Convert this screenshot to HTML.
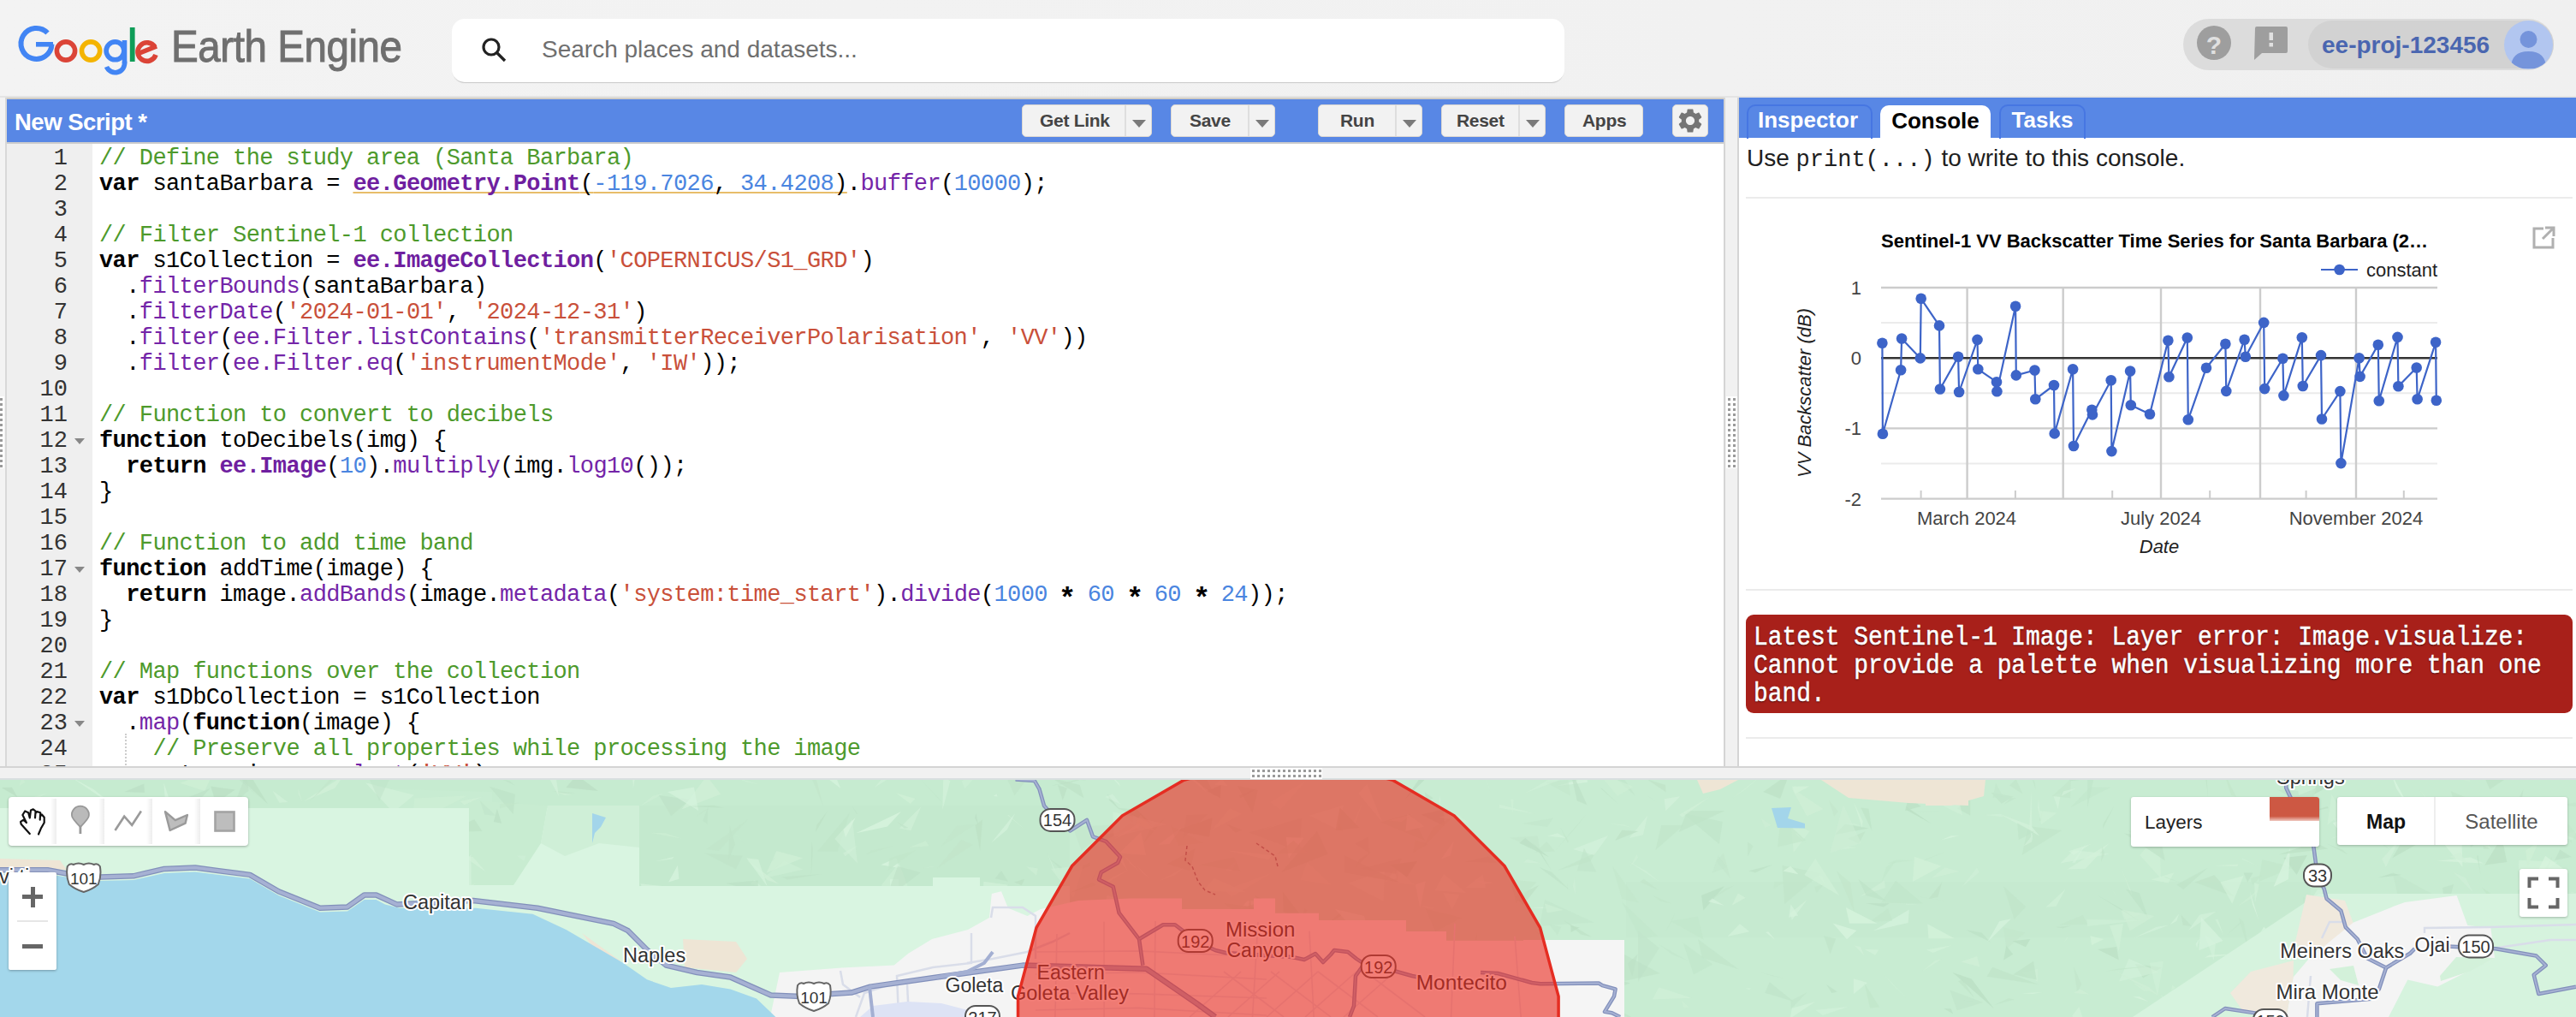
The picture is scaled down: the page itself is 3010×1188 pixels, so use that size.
<!DOCTYPE html>
<html><head><meta charset="utf-8">
<style>
*{margin:0;padding:0;box-sizing:border-box}
html,body{width:3010px;height:1188px;overflow:hidden;background:#f0f0f0;font-family:"Liberation Sans",sans-serif}
.a{position:absolute}
#hdr{left:0;top:0;width:3010px;height:112px;background:linear-gradient(90deg,#f3f3f3,#f0f0f0)}
#hdrline{left:0;top:112px;width:3010px;height:2px;background:#e4e4e4}
.logo-ee{left:200px;top:24px;font-size:52px;color:#6f6f6f;letter-spacing:-0.5px;line-height:60px;white-space:nowrap;transform-origin:0 0;transform:scaleX(0.915);-webkit-text-stroke:1px #6f6f6f}
#search{left:528px;top:22px;width:1300px;height:74px;background:#fff;border-radius:15px;box-shadow:0 2px 1px -1px #c8c8c8}
#search .ph{left:105px;top:19px;font-size:28px;color:#6f6f6f;line-height:34px;white-space:nowrap}
#rgrp{left:2551px;top:22px;width:433px;height:60px;border-radius:30px;background:#dcdcdc}
#proj{left:2697px;top:24px;width:287px;height:56px;border-radius:28px;background:#d2d2d2}
#projtxt{left:2713px;top:36px;font-size:28px;font-weight:bold;color:#4a66b0;line-height:34px;white-space:nowrap}
#avatar{left:2926px;top:24px;width:57px;height:57px;border-radius:50%;background:#b2c6f0;overflow:hidden}
/* left code panel */
#lsplit{left:0;top:114px;width:6px;height:782px;background:#f3f3f3}
#lborder{left:6px;top:114px;width:2px;height:782px;background:#d8d8d8}
#ptop{left:8px;top:114px;width:2006px;height:2px;background:#d0ccc6}
#pbar{left:8px;top:116px;width:2006px;height:50px;background:#5887e5}
#pbot{left:8px;top:166px;width:2006px;height:2px;background:#cccccc}
#ptitle{left:17px;top:126px;font-size:27.5px;font-weight:bold;color:#fff;line-height:34px;white-space:nowrap;letter-spacing:-0.5px}
.btn{position:absolute;top:122px;height:38px;background:#f2f2f2;border:1px solid #dcd8d2;border-radius:5px}
.btn span{position:absolute;top:0;line-height:36px;font-size:21px;font-weight:bold;color:#444;white-space:nowrap;letter-spacing:-0.3px}
.btn .dv{position:absolute;top:0;width:2px;height:36px;background:#dedede}
.btn .tri{position:absolute;top:17px;width:0;height:0;border-left:8px solid transparent;border-right:8px solid transparent;border-top:9px solid #7a7a7a}
#editor{left:8px;top:168px;width:2006px;height:727px;background:#fff;overflow:hidden}
#gutter{left:0;top:0;width:100px;height:727px;background:#efefef}
.ln{position:absolute;left:0;width:71px;text-align:right;font-family:"Liberation Mono",monospace;font-size:27px;color:#333;line-height:30px}
.cl{position:absolute;left:108px;font-family:"Liberation Mono",monospace;font-size:27px;letter-spacing:-0.6px;color:#000;line-height:30px;white-space:pre}
.ul{text-decoration:underline;text-decoration-color:#e8bd6a;text-decoration-thickness:2px;text-underline-offset:2px;text-decoration-skip-ink:none}
.ast{display:inline-block;width:15.6px;text-align:center;transform:translateY(5px) scale(1.25);font-weight:bold}
.c{color:#4d9a2c}.k{font-weight:bold;color:#000}.ee{font-weight:bold;color:#6f1fa0}.m{color:#7425a8}.s{color:#c9503a}.n{color:#4a85e0}
.fold{position:absolute;left:79px;width:0;height:0;border-left:6px solid transparent;border-right:6px solid transparent;border-top:7px solid #888}
#edbot{left:8px;top:895px;width:2006px;height:2px;background:#d4d4d4}
/* vertical splitter */
#vs1{left:2014px;top:114px;width:2px;height:782px;background:#d4d4d4}
#vs{left:2016px;top:114px;width:14px;height:782px;background:#f1f1f1}
#vs2{left:2030px;top:114px;width:2px;height:782px;background:#d4d4d4}
/* right panel */
#rpanel{left:2032px;top:114px;width:978px;height:782px;background:#fff}
#rbar{left:2032px;top:114px;width:978px;height:47px;background:#5887e5}
.tab{position:absolute;height:40px;border:2px solid #4676e2;border-bottom:none;border-radius:10px 10px 0 0;font-size:26px;font-weight:bold;color:#fff;line-height:33px;text-align:center;white-space:nowrap}
#console-txt{left:2041px;top:168px;font-size:28px;color:#202020;line-height:34px;white-space:nowrap}
#console-txt code{font-family:"Liberation Mono",monospace;font-size:27px}
.hr{position:absolute;height:2px;background:#ebebeb}
#err{left:2040px;top:718px;width:966px;height:115px;background:#a8201a;border-radius:9px}
#err div{position:absolute;left:9px;top:10px;font-family:"Liberation Mono",monospace;font-size:31px;line-height:33px;color:#fff;text-shadow:0 1px 2px rgba(40,0,0,0.8);-webkit-text-stroke:0.5px #fff;white-space:pre;transform-origin:0 0;transform:scaleX(0.9)}
/* h splitter */
#hs1{left:0;top:895px;width:3010px;height:2px;background:#d4d4d4}
#hs{left:0;top:897px;width:3010px;height:12px;background:#f1f1f1}
#hs2{left:0;top:909px;width:3010px;height:2px;background:#d9dfe0}
/* map */
#map{left:0;top:911px;width:3010px;height:277px;overflow:hidden;background:#c8eed3}
</style></head>
<body>
<div class="a" id="hdr"></div>
<div class="a" id="hdrline"></div>
<!-- Google logo -->
<svg class="a" style="left:0;top:0" width="200" height="100" viewBox="0 0 200 100">
 <path d="M60.5 51.7 A18 18 0 1 1 55.5 38.5" fill="none" stroke="#4285f4" stroke-width="6"/>
 <rect x="42" y="49" width="20" height="5.6" fill="#4285f4"/>
 <circle cx="77" cy="59.5" r="10.6" fill="none" stroke="#db4437" stroke-width="5.6"/>
 <circle cx="106.1" cy="59.5" r="10.6" fill="none" stroke="#f4b400" stroke-width="5.6"/>
 <circle cx="134.5" cy="59.3" r="10.4" fill="none" stroke="#4285f4" stroke-width="5.6"/>
 <rect x="142.7" y="47" width="5.6" height="27" fill="#4285f4"/>
 <path d="M145.5 72 A11 11 0 0 1 124.5 78" fill="none" stroke="#4285f4" stroke-width="5.6"/>
 <rect x="151.8" y="32" width="5.8" height="40" fill="#0f9d58"/>
 <path d="M182 64 A10.8 10.8 0 1 1 181 55" fill="none" stroke="#db4437" stroke-width="5.6"/>
 <path d="M163 62 L183 54" stroke="#db4437" stroke-width="5.6"/>
</svg>
<div class="a logo-ee">Earth Engine</div>
<div class="a" id="search">
 <svg class="a" style="left:34px;top:21px" width="32" height="32" viewBox="0 0 32 32"><circle cx="12" cy="12" r="9" fill="none" stroke="#222" stroke-width="3.2"/><path d="M18.5 18.5 L28 28" stroke="#222" stroke-width="3.4"/></svg>
 <div class="a ph">Search places and datasets...</div>
</div>
<div class="a" id="rgrp"></div>
<svg class="a" style="left:2566px;top:30px" width="44" height="44" viewBox="0 0 44 44"><circle cx="21" cy="20" r="20" fill="#9e9e9e"/><text x="21" y="33" font-family="Liberation Sans" font-weight="bold" font-size="30" fill="#e0e0e0" text-anchor="middle">?</text></svg>
<svg class="a" style="left:2633px;top:30px" width="42" height="42" viewBox="0 0 42 42"><path d="M2 3 Q2 1 4 1 L38 1 Q40 1 40 3 L40 30 Q40 32 38 32 L10 32 L1 40 Z" fill="#9e9e9e"/><rect x="18.5" y="8" width="4.5" height="9" fill="#e0e0e0"/><rect x="18.5" y="20" width="4.5" height="4.5" fill="#e0e0e0"/></svg>
<div class="a" id="proj"></div>
<div class="a" id="projtxt">ee-proj-123456</div>
<div class="a" id="avatar"><svg width="57" height="57" viewBox="0 0 57 57"><circle cx="28.5" cy="22" r="10" fill="#7594db"/><path d="M8 56 Q8 36 28.5 36 Q49 36 49 56 Z" fill="#7594db"/></svg></div>

<!-- left panel -->
<div class="a" id="lsplit"></div>
<div class="a" id="lborder"></div>
<div class="a" id="ptop"></div>
<div class="a" id="pbar"></div>
<div class="a" id="pbot"></div>
<div class="a" id="ptitle">New Script *</div>
<div class="btn" style="left:1194px;width:152px"><span style="left:20px">Get Link</span><div class="dv" style="left:119px"></div><div class="tri" style="left:128px"></div></div>
<div class="btn" style="left:1368px;width:122px"><span style="left:21px">Save</span><div class="dv" style="left:89px"></div><div class="tri" style="left:98px"></div></div>
<div class="btn" style="left:1540px;width:122px"><span style="left:25px">Run</span><div class="dv" style="left:89px"></div><div class="tri" style="left:98px"></div></div>
<div class="btn" style="left:1684px;width:122px"><span style="left:17px">Reset</span><div class="dv" style="left:89px"></div><div class="tri" style="left:98px"></div></div>
<div class="btn" style="left:1828px;width:92px"><span style="left:20px">Apps</span></div>
<div class="btn" style="left:1954px;width:42px"><svg class="a" style="left:3px;top:1px" width="34" height="34" viewBox="0 0 24 24"><path fill="#757575" d="M19.14 12.94c.04-.3.06-.61.06-.94 0-.32-.02-.64-.07-.94l2.03-1.58c.18-.14.23-.41.12-.61l-1.92-3.32c-.12-.22-.37-.29-.59-.22l-2.39.96c-.5-.38-1.03-.7-1.62-.94l-.36-2.54c-.04-.24-.24-.41-.48-.41h-3.84c-.24 0-.43.17-.47.41l-.36 2.54c-.59.24-1.13.57-1.62.94l-2.39-.96c-.22-.08-.47 0-.59.22L2.74 8.87c-.12.21-.08.47.12.61l2.03 1.58c-.05.3-.09.63-.09.94s.02.64.07.94l-2.03 1.58c-.18.14-.23.41-.12.61l1.92 3.32c.12.22.37.29.59.22l2.39-.96c.5.38 1.03.7 1.62.94l.36 2.54c.05.24.24.41.48.41h3.84c.24 0 .44-.17.47-.41l.36-2.54c.59-.24 1.13-.56 1.62-.94l2.39.96c.22.08.47 0 .59-.22l1.92-3.32c.12-.22.07-.47-.12-.61l-2.01-1.58zM12 15.6c-1.98 0-3.6-1.62-3.6-3.6s1.62-3.6 3.6-3.6 3.6 1.62 3.6 3.6-1.62 3.6-3.6 3.6z"/></svg></div>

<div class="a" id="editor">
 <div class="a" id="gutter"></div>
 <div class="ln" style="top:2px">1</div>
<div class="cl" style="top:2px"><span class="c">// Define the study area (Santa Barbara)</span></div>
<div class="ln" style="top:32px">2</div>
<div class="cl" style="top:32px"><span class="k">var</span> santaBarbara = <span class="ul"><span class="ee">ee.Geometry.Point</span>(<span class="n">-119.7026</span>, <span class="n">34.4208</span>)</span>.<span class="m">buffer</span>(<span class="n">10000</span>);</div>
<div class="ln" style="top:62px">3</div>
<div class="cl" style="top:62px"></div>
<div class="ln" style="top:92px">4</div>
<div class="cl" style="top:92px"><span class="c">// Filter Sentinel-1 collection</span></div>
<div class="ln" style="top:122px">5</div>
<div class="cl" style="top:122px"><span class="k">var</span> s1Collection = <span class="ee">ee.ImageCollection</span>(<span class="s">'COPERNICUS/S1_GRD'</span>)</div>
<div class="ln" style="top:152px">6</div>
<div class="cl" style="top:152px">  .<span class="m">filterBounds</span>(santaBarbara)</div>
<div class="ln" style="top:182px">7</div>
<div class="cl" style="top:182px">  .<span class="m">filterDate</span>(<span class="s">'2024-01-01'</span>, <span class="s">'2024-12-31'</span>)</div>
<div class="ln" style="top:212px">8</div>
<div class="cl" style="top:212px">  .<span class="m">filter</span>(<span class="m">ee.Filter.listContains</span>(<span class="s">'transmitterReceiverPolarisation'</span>, <span class="s">'VV'</span>))</div>
<div class="ln" style="top:242px">9</div>
<div class="cl" style="top:242px">  .<span class="m">filter</span>(<span class="m">ee.Filter.eq</span>(<span class="s">'instrumentMode'</span>, <span class="s">'IW'</span>));</div>
<div class="ln" style="top:272px">10</div>
<div class="cl" style="top:272px"></div>
<div class="ln" style="top:302px">11</div>
<div class="cl" style="top:302px"><span class="c">// Function to convert to decibels</span></div>
<div class="ln" style="top:332px">12</div>
<div class="cl" style="top:332px"><span class="k">function</span> toDecibels(img) {</div>
<div class="ln" style="top:362px">13</div>
<div class="cl" style="top:362px">  <span class="k">return</span> <span class="ee">ee.Image</span>(<span class="n">10</span>).<span class="m">multiply</span>(img.<span class="m">log10</span>());</div>
<div class="ln" style="top:392px">14</div>
<div class="cl" style="top:392px">}</div>
<div class="ln" style="top:422px">15</div>
<div class="cl" style="top:422px"></div>
<div class="ln" style="top:452px">16</div>
<div class="cl" style="top:452px"><span class="c">// Function to add time band</span></div>
<div class="ln" style="top:482px">17</div>
<div class="cl" style="top:482px"><span class="k">function</span> addTime(image) {</div>
<div class="ln" style="top:512px">18</div>
<div class="cl" style="top:512px">  <span class="k">return</span> image.<span class="m">addBands</span>(image.<span class="m">metadata</span>(<span class="s">'system:time_start'</span>).<span class="m">divide</span>(<span class="n">1000</span> <span class="ast">*</span> <span class="n">60</span> <span class="ast">*</span> <span class="n">60</span> <span class="ast">*</span> <span class="n">24</span>));</div>
<div class="ln" style="top:542px">19</div>
<div class="cl" style="top:542px">}</div>
<div class="ln" style="top:572px">20</div>
<div class="cl" style="top:572px"></div>
<div class="ln" style="top:602px">21</div>
<div class="cl" style="top:602px"><span class="c">// Map functions over the collection</span></div>
<div class="ln" style="top:632px">22</div>
<div class="cl" style="top:632px"><span class="k">var</span> s1DbCollection = s1Collection</div>
<div class="ln" style="top:662px">23</div>
<div class="cl" style="top:662px">  .<span class="m">map</span>(<span class="k">function</span>(image) {</div>
<div class="ln" style="top:692px">24</div>
<div class="cl" style="top:692px">    <span class="c">// Preserve all properties while processing the image</span></div>
<div class="ln" style="top:722px">25</div>
<div class="cl" style="top:722px">    <span class="k">return</span> image.<span class="m">select</span>(<span class="s">'VV'</span>)</div>
<div class="fold" style="top:344px"></div>
<div class="fold" style="top:494px"></div>
<div class="fold" style="top:674px"></div>
<div class="a" style="left:138px;top:689px;width:0;height:60px;border-left:2px dotted #ccc"></div>
</div>
<div class="a" id="edbot"></div>

<div class="a" id="vs1"></div>
<div class="a" id="vs"></div>
<div class="a" id="vs2"></div>

<div class="a" id="rpanel"></div>
<div class="a" id="rbar"></div>
<div class="tab" style="left:2041px;top:122px;width:147px;padding-right:4px">Inspector</div>
<div class="tab" style="left:2197px;top:123px;width:129px;height:38px;background:#fff;color:#000;border-color:#fff;">Console</div>
<div class="tab" style="left:2336px;top:122px;width:101px;">Tasks</div>
<div class="a" id="console-txt">Use <code>print(...)</code> to write to this console.</div>
<div class="hr" style="left:2040px;top:230px;width:966px"></div>
<svg class="a" style="left:2040px;top:235px" width="966" height="450" viewBox="2040 235 966 450">
<line x1="2198" x2="2848" y1="377.1" y2="377.1" stroke="#ebebeb" stroke-width="2"/>
<line x1="2198" x2="2848" y1="459.3" y2="459.3" stroke="#ebebeb" stroke-width="2"/>
<line x1="2198" x2="2848" y1="541.5" y2="541.5" stroke="#ebebeb" stroke-width="2"/>
<line x1="2198" x2="2848" y1="336" y2="336" stroke="#cccccc" stroke-width="2.4"/>
<line x1="2198" x2="2848" y1="500.4" y2="500.4" stroke="#cccccc" stroke-width="2.4"/>
<line x1="2198" x2="2848" y1="582.6" y2="582.6" stroke="#cccccc" stroke-width="2.4"/>
<line x1="2298.6" x2="2298.6" y1="335" y2="583" stroke="#cccccc" stroke-width="2.4"/>
<line x1="2410.7" x2="2410.7" y1="335" y2="583" stroke="#cccccc" stroke-width="2.4"/>
<line x1="2525" x2="2525" y1="335" y2="583" stroke="#cccccc" stroke-width="2.4"/>
<line x1="2641" x2="2641" y1="335" y2="583" stroke="#cccccc" stroke-width="2.4"/>
<line x1="2753" x2="2753" y1="335" y2="583" stroke="#cccccc" stroke-width="2.4"/>
<line x1="2244.6" x2="2244.6" y1="573" y2="583" stroke="#cccccc" stroke-width="2"/>
<line x1="2354.9" x2="2354.9" y1="573" y2="583" stroke="#cccccc" stroke-width="2"/>
<line x1="2468.2" x2="2468.2" y1="573" y2="583" stroke="#cccccc" stroke-width="2"/>
<line x1="2582.2" x2="2582.2" y1="573" y2="583" stroke="#cccccc" stroke-width="2"/>
<line x1="2694.6" x2="2694.6" y1="573" y2="583" stroke="#cccccc" stroke-width="2"/>
<line x1="2808.8" x2="2808.8" y1="573" y2="583" stroke="#cccccc" stroke-width="2"/>
<line x1="2198" x2="2848" y1="418.2" y2="418.2" stroke="#333" stroke-width="2.4"/>
<path d="M2199.4,400.7 L2199.9,506.8 L2221.1,432.3 L2222.1,395.5 L2243.8,418.4 L2244.7,348.8 L2266,380.4 L2266.9,454.5 L2288.1,416.7 L2289.1,458 L2310.5,396.9 L2311.3,431.3 L2333,446.2 L2333.4,457.3 L2355.1,357.7 L2355.8,438.4 L2377.5,432.5 L2378.3,466.3 L2400,450 L2400.7,506.4 L2422.1,431.3 L2423,521 L2444.3,478.8 L2445,484.4 L2466.7,444.3 L2467.4,527.1 L2489.1,433.5 L2489.8,473.3 L2512,483.7 L2533.4,397.8 L2534.4,440.3 L2555.8,394.5 L2556.8,490.3 L2578,429.7 L2600.4,401.7 L2601.3,456.9 L2622.6,396.7 L2623.8,416.8 L2645.2,376.9 L2646.2,454.1 L2667.4,418.7 L2668.4,462.1 L2689.8,394.3 L2690.8,451 L2712,415.1 L2713,489.5 L2734.4,457.1 L2735.4,541.1 L2756.6,418.2 L2757.6,439.9 L2778.8,402.8 L2779.8,468.2 L2801.5,393.9 L2802.4,451.2 L2823.7,429.5 L2824.6,466.3 L2846.1,399.8 L2846.8,467.7" fill="none" stroke="#3d64c8" stroke-width="2.2" stroke-linejoin="round"/>
<circle cx="2199.4" cy="400.7" r="6.3" fill="#3d64c8"/>
<circle cx="2199.9" cy="506.8" r="6.3" fill="#3d64c8"/>
<circle cx="2221.1" cy="432.3" r="6.3" fill="#3d64c8"/>
<circle cx="2222.1" cy="395.5" r="6.3" fill="#3d64c8"/>
<circle cx="2243.8" cy="418.4" r="6.3" fill="#3d64c8"/>
<circle cx="2244.7" cy="348.8" r="6.3" fill="#3d64c8"/>
<circle cx="2266" cy="380.4" r="6.3" fill="#3d64c8"/>
<circle cx="2266.9" cy="454.5" r="6.3" fill="#3d64c8"/>
<circle cx="2288.1" cy="416.7" r="6.3" fill="#3d64c8"/>
<circle cx="2289.1" cy="458" r="6.3" fill="#3d64c8"/>
<circle cx="2310.5" cy="396.9" r="6.3" fill="#3d64c8"/>
<circle cx="2311.3" cy="431.3" r="6.3" fill="#3d64c8"/>
<circle cx="2333" cy="446.2" r="6.3" fill="#3d64c8"/>
<circle cx="2333.4" cy="457.3" r="6.3" fill="#3d64c8"/>
<circle cx="2355.1" cy="357.7" r="6.3" fill="#3d64c8"/>
<circle cx="2355.8" cy="438.4" r="6.3" fill="#3d64c8"/>
<circle cx="2377.5" cy="432.5" r="6.3" fill="#3d64c8"/>
<circle cx="2378.3" cy="466.3" r="6.3" fill="#3d64c8"/>
<circle cx="2400" cy="450" r="6.3" fill="#3d64c8"/>
<circle cx="2400.7" cy="506.4" r="6.3" fill="#3d64c8"/>
<circle cx="2422.1" cy="431.3" r="6.3" fill="#3d64c8"/>
<circle cx="2423" cy="521" r="6.3" fill="#3d64c8"/>
<circle cx="2444.3" cy="478.8" r="6.3" fill="#3d64c8"/>
<circle cx="2445" cy="484.4" r="6.3" fill="#3d64c8"/>
<circle cx="2466.7" cy="444.3" r="6.3" fill="#3d64c8"/>
<circle cx="2467.4" cy="527.1" r="6.3" fill="#3d64c8"/>
<circle cx="2489.1" cy="433.5" r="6.3" fill="#3d64c8"/>
<circle cx="2489.8" cy="473.3" r="6.3" fill="#3d64c8"/>
<circle cx="2512" cy="483.7" r="6.3" fill="#3d64c8"/>
<circle cx="2533.4" cy="397.8" r="6.3" fill="#3d64c8"/>
<circle cx="2534.4" cy="440.3" r="6.3" fill="#3d64c8"/>
<circle cx="2555.8" cy="394.5" r="6.3" fill="#3d64c8"/>
<circle cx="2556.8" cy="490.3" r="6.3" fill="#3d64c8"/>
<circle cx="2578" cy="429.7" r="6.3" fill="#3d64c8"/>
<circle cx="2600.4" cy="401.7" r="6.3" fill="#3d64c8"/>
<circle cx="2601.3" cy="456.9" r="6.3" fill="#3d64c8"/>
<circle cx="2622.6" cy="396.7" r="6.3" fill="#3d64c8"/>
<circle cx="2623.8" cy="416.8" r="6.3" fill="#3d64c8"/>
<circle cx="2645.2" cy="376.9" r="6.3" fill="#3d64c8"/>
<circle cx="2646.2" cy="454.1" r="6.3" fill="#3d64c8"/>
<circle cx="2667.4" cy="418.7" r="6.3" fill="#3d64c8"/>
<circle cx="2668.4" cy="462.1" r="6.3" fill="#3d64c8"/>
<circle cx="2689.8" cy="394.3" r="6.3" fill="#3d64c8"/>
<circle cx="2690.8" cy="451" r="6.3" fill="#3d64c8"/>
<circle cx="2712" cy="415.1" r="6.3" fill="#3d64c8"/>
<circle cx="2713" cy="489.5" r="6.3" fill="#3d64c8"/>
<circle cx="2734.4" cy="457.1" r="6.3" fill="#3d64c8"/>
<circle cx="2735.4" cy="541.1" r="6.3" fill="#3d64c8"/>
<circle cx="2756.6" cy="418.2" r="6.3" fill="#3d64c8"/>
<circle cx="2757.6" cy="439.9" r="6.3" fill="#3d64c8"/>
<circle cx="2778.8" cy="402.8" r="6.3" fill="#3d64c8"/>
<circle cx="2779.8" cy="468.2" r="6.3" fill="#3d64c8"/>
<circle cx="2801.5" cy="393.9" r="6.3" fill="#3d64c8"/>
<circle cx="2802.4" cy="451.2" r="6.3" fill="#3d64c8"/>
<circle cx="2823.7" cy="429.5" r="6.3" fill="#3d64c8"/>
<circle cx="2824.6" cy="466.3" r="6.3" fill="#3d64c8"/>
<circle cx="2846.1" cy="399.8" r="6.3" fill="#3d64c8"/>
<circle cx="2846.8" cy="467.7" r="6.3" fill="#3d64c8"/>
<text x="2198" y="289" font-family="Liberation Sans" font-size="22" font-weight="bold" fill="#000">Sentinel-1 VV Backscatter Time Series for Santa Barbara (2…</text>
<line x1="2712" x2="2755" y1="315" y2="315" stroke="#3d64c8" stroke-width="2.2"/><circle cx="2733.6" cy="315" r="6.3" fill="#3d64c8"/>
<text x="2765" y="323" font-family="Liberation Sans" font-size="22" fill="#222">constant</text>
<text x="2175" y="344" font-family="Liberation Sans" font-size="22" fill="#444" text-anchor="end">1</text>
<text x="2175" y="426.2" font-family="Liberation Sans" font-size="22" fill="#444" text-anchor="end">0</text>
<text x="2175" y="508.4" font-family="Liberation Sans" font-size="22" fill="#444" text-anchor="end">-1</text>
<text x="2175" y="590.6" font-family="Liberation Sans" font-size="22" fill="#444" text-anchor="end">-2</text>
<text x="2298" y="613" font-family="Liberation Sans" font-size="22" fill="#444" text-anchor="middle">March 2024</text>
<text x="2525" y="613" font-family="Liberation Sans" font-size="22" fill="#444" text-anchor="middle">July 2024</text>
<text x="2753" y="613" font-family="Liberation Sans" font-size="22" fill="#444" text-anchor="middle">November 2024</text>
<text x="2523" y="646" font-family="Liberation Sans" font-size="22" font-style="italic" fill="#222" text-anchor="middle">Date</text>
<text x="0" y="0" transform="translate(2116,459) rotate(-90)" font-family="Liberation Sans" font-size="22" font-style="italic" fill="#222" text-anchor="middle">VV Backscatter (dB)</text>
<g fill="none" stroke="#b0b0b0" stroke-width="3"><path d="M2972 267 L2961 267 L2961 289 L2983 289 L2983 278"/><path d="M2974 266 L2984 266 L2984 276 M2984 266 L2971 279"/></g>
</svg>
<div class="hr" style="left:2040px;top:688px;width:966px"></div>
<div class="a" id="err"><div>Latest Sentinel-1 Image: Layer error: Image.visualize:
Cannot provide a palette when visualizing more than one
band.</div></div>
<div class="hr" style="left:2040px;top:861px;width:966px"></div>

<div class="a" id="hs1"></div>
<div class="a" id="hs"></div>
<div class="a" id="hs2"></div>

<svg class="a" style="left:0;top:463px" width="6" height="84"><rect width="5" height="84" fill="#fff"/><g fill="#9a9a9a"><rect x="0" y="2" width="3" height="3"/><rect x="0" y="8" width="3" height="3"/><rect x="0" y="14" width="3" height="3"/><rect x="0" y="20" width="3" height="3"/><rect x="0" y="26" width="3" height="3"/><rect x="0" y="32" width="3" height="3"/><rect x="0" y="38" width="3" height="3"/><rect x="0" y="44" width="3" height="3"/><rect x="0" y="50" width="3" height="3"/><rect x="0" y="56" width="3" height="3"/><rect x="0" y="62" width="3" height="3"/><rect x="0" y="68" width="3" height="3"/><rect x="0" y="74" width="3" height="3"/><rect x="0" y="80" width="3" height="3"/></g></svg>
<svg class="a" style="left:2017px;top:463px" width="13" height="84"><rect width="13" height="84" fill="#fff"/><g fill="#9a9a9a"><rect x="2" y="2" width="3" height="3"/><rect x="8" y="2" width="3" height="3"/><rect x="2" y="8" width="3" height="3"/><rect x="8" y="8" width="3" height="3"/><rect x="2" y="14" width="3" height="3"/><rect x="8" y="14" width="3" height="3"/><rect x="2" y="20" width="3" height="3"/><rect x="8" y="20" width="3" height="3"/><rect x="2" y="26" width="3" height="3"/><rect x="8" y="26" width="3" height="3"/><rect x="2" y="32" width="3" height="3"/><rect x="8" y="32" width="3" height="3"/><rect x="2" y="38" width="3" height="3"/><rect x="8" y="38" width="3" height="3"/><rect x="2" y="44" width="3" height="3"/><rect x="8" y="44" width="3" height="3"/><rect x="2" y="50" width="3" height="3"/><rect x="8" y="50" width="3" height="3"/><rect x="2" y="56" width="3" height="3"/><rect x="8" y="56" width="3" height="3"/><rect x="2" y="62" width="3" height="3"/><rect x="8" y="62" width="3" height="3"/><rect x="2" y="68" width="3" height="3"/><rect x="8" y="68" width="3" height="3"/><rect x="2" y="74" width="3" height="3"/><rect x="8" y="74" width="3" height="3"/><rect x="2" y="80" width="3" height="3"/><rect x="8" y="80" width="3" height="3"/></g></svg>
<svg class="a" style="left:1461px;top:897px" width="84" height="13"><rect width="84" height="13" fill="#fff"/><g fill="#9a9a9a"><rect x="2" y="2" width="3" height="3"/><rect x="2" y="8" width="3" height="3"/><rect x="8" y="2" width="3" height="3"/><rect x="8" y="8" width="3" height="3"/><rect x="14" y="2" width="3" height="3"/><rect x="14" y="8" width="3" height="3"/><rect x="20" y="2" width="3" height="3"/><rect x="20" y="8" width="3" height="3"/><rect x="26" y="2" width="3" height="3"/><rect x="26" y="8" width="3" height="3"/><rect x="32" y="2" width="3" height="3"/><rect x="32" y="8" width="3" height="3"/><rect x="38" y="2" width="3" height="3"/><rect x="38" y="8" width="3" height="3"/><rect x="44" y="2" width="3" height="3"/><rect x="44" y="8" width="3" height="3"/><rect x="50" y="2" width="3" height="3"/><rect x="50" y="8" width="3" height="3"/><rect x="56" y="2" width="3" height="3"/><rect x="56" y="8" width="3" height="3"/><rect x="62" y="2" width="3" height="3"/><rect x="62" y="8" width="3" height="3"/><rect x="68" y="2" width="3" height="3"/><rect x="68" y="8" width="3" height="3"/><rect x="74" y="2" width="3" height="3"/><rect x="74" y="8" width="3" height="3"/><rect x="80" y="2" width="3" height="3"/><rect x="80" y="8" width="3" height="3"/></g></svg>
<div class="a" id="map">
 <svg class="a" style="left:0;top:0" width="3010" height="277" viewBox="0 911 3010 277">
<rect x="0" y="911" width="3010" height="277" fill="#c8ecd2"/>
<path d="M0.0,944.0 L1250.0,944.0 L1250.0,1188.0 L0.0,1188.0 Z" fill="#d9f5e1"/>
<path d="M0.0,911.0 L1250.0,911.0 L1250.0,941.0 L575.0,941.0 L575.0,925.0 L458.0,922.0 L458.0,944.0 L0.0,944.0 Z" fill="#c6ebd0"/>
<path d="M548.0,935.0 L640.0,941.0 L632.0,985.0 L600.0,1034.0 L548.0,1034.0 Z" fill="#c8ecd1"/>
<path d="M640.0,941.0 L747.0,941.0 L747.0,990.0 L700.0,985.0 L660.0,1000.0 L632.0,985.0 Z" fill="#cfefd7"/>
<path d="M747.0,941.0 L1250.0,941.0 L1250.0,1035.0 L1145.0,1035.0 L1145.0,1025.0 L1090.0,1025.0 L1090.0,1035.0 L1050.0,1035.0 L1050.0,1027.0 L1040.0,1027.0 L1040.0,1035.0 L747.0,1035.0 Z" fill="#c4e9ce"/>
<path d="M1900.0,1030.0 L2700.0,1030.0 L2700.0,1095.0 L1900.0,1095.0 Z" fill="#c4e9ce" fill-opacity="0.6"/>
<clipPath id="mtn"><path d="M0.0,911.0 L1250.0,911.0 L1250.0,1035.0 L747.0,1035.0 L747.0,944.0 L640.0,941.0 L600.0,1034.0 L548.0,1034.0 L548.0,944.0 L0.0,944.0 Z M1250.0,911.0 L3010.0,911.0 L3010.0,1044.0 L2709.0,1044.0 L2492.0,1188.0 L1898.0,1188.0 L1898.0,1098.0 L1250.0,1098.0 Z"/></clipPath>
<g clip-path="url(#mtn)"><path d="M152.9,1019.2 L165.9,1027.5 L188.6,997.7 Z" fill="#c2e6cb" fill-opacity="0.67"/>
<path d="M971.3,894.7 L982.3,921.0 L937.5,886.7 Z" fill="#d6f3dd" fill-opacity="0.77"/>
<path d="M1235.1,1021.8 L1223.8,996.4 L1230.5,1014.2 Z" fill="#d2f1d9" fill-opacity="0.67"/>
<path d="M1158.3,1034.8 L1148.5,1035.3 L1166.2,1040.7 Z" fill="#d6f3dd" fill-opacity="0.70"/>
<path d="M1165.7,930.6 L1164.4,927.2 L1160.9,930.0 Z" fill="#d6f3dd" fill-opacity="0.67"/>
<path d="M229.0,972.7 L214.1,979.5 L235.6,980.1 Z" fill="#c2e6cb" fill-opacity="0.79"/>
<path d="M599.6,951.1 L601.9,927.7 L571.8,918.8 Z" fill="#bce0c5" fill-opacity="0.59"/>
<path d="M645.0,1023.2 L650.1,1054.2 L619.5,1046.4 Z" fill="#cfefd6" fill-opacity="0.70"/>
<path d="M178.8,1009.4 L158.1,1011.5 L178.5,1007.5 Z" fill="#d6f3dd" fill-opacity="0.64"/>
<path d="M676.0,967.2 L662.7,974.1 L683.4,1006.0 Z" fill="#d6f3dd" fill-opacity="0.51"/>
<path d="M1185.5,929.3 L1173.0,901.1 L1210.5,896.2 Z" fill="#bfe3c8" fill-opacity="0.56"/>
<path d="M672.8,926.3 L657.5,926.9 L645.8,924.1 Z" fill="#bfe3c8" fill-opacity="0.60"/>
<path d="M356.0,999.3 L356.8,986.3 L311.3,974.3 Z" fill="#d6f3dd" fill-opacity="0.78"/>
<path d="M871.8,987.2 L855.1,970.5 L859.9,975.5 Z" fill="#d6f3dd" fill-opacity="0.76"/>
<path d="M528.2,993.3 L523.8,994.0 L550.1,999.5 Z" fill="#bce0c5" fill-opacity="0.60"/>
<path d="M19.0,1033.3 L12.5,1016.8 L20.3,1033.5 Z" fill="#cfefd6" fill-opacity="0.51"/>
<path d="M274.8,922.5 L252.1,938.0 L246.3,918.6 Z" fill="#bce0c5" fill-opacity="0.85"/>
<path d="M1127.5,921.2 L1143.6,902.9 L1123.5,912.4 Z" fill="#cfefd6" fill-opacity="0.64"/>
<path d="M1136.6,986.9 L1123.3,980.8 L1094.9,1014.6 Z" fill="#c2e6cb" fill-opacity="0.74"/>
<path d="M1050.8,967.4 L1064.3,970.3 L1076.5,942.1 Z" fill="#d2f1d9" fill-opacity="0.63"/>
<path d="M484.3,932.5 L481.7,961.9 L546.2,929.4 Z" fill="#cfefd6" fill-opacity="0.53"/>
<path d="M359.7,1023.4 L323.7,1038.0 L354.3,1003.6 Z" fill="#d2f1d9" fill-opacity="0.67"/>
<path d="M1050.8,1014.0 L1029.2,1010.3 L1047.2,1002.2 Z" fill="#d6f3dd" fill-opacity="0.86"/>
<path d="M461.2,1021.2 L474.9,1012.0 L488.0,1008.4 Z" fill="#c2e6cb" fill-opacity="0.79"/>
<path d="M383.3,951.1 L408.2,956.2 L391.9,968.4 Z" fill="#cfefd6" fill-opacity="0.85"/>
<path d="M580.8,944.8 L586.1,961.8 L576.8,960.0 Z" fill="#bce0c5" fill-opacity="0.76"/>
<path d="M1178.2,951.7 L1199.6,970.7 L1177.2,952.3 Z" fill="#cfefd6" fill-opacity="0.82"/>
<path d="M109.2,921.9 L141.4,947.4 L82.8,907.6 Z" fill="#d6f3dd" fill-opacity="0.70"/>
<path d="M1102.3,908.2 L1110.3,912.2 L1101.3,946.0 Z" fill="#d6f3dd" fill-opacity="0.62"/>
<path d="M872.2,1004.1 L896.4,1028.0 L909.9,1032.5 Z" fill="#cfefd6" fill-opacity="0.86"/>
<path d="M1039.2,1002.4 L1037.9,1016.5 L1069.8,993.3 Z" fill="#c2e6cb" fill-opacity="0.82"/>
<path d="M688.7,972.1 L680.5,964.2 L658.0,986.5 Z" fill="#bce0c5" fill-opacity="0.51"/>
<path d="M850.9,1005.4 L858.8,986.2 L852.8,964.5 Z" fill="#bfe3c8" fill-opacity="0.71"/>
<path d="M640.2,1001.6 L618.4,992.4 L630.1,981.9 Z" fill="#bce0c5" fill-opacity="0.74"/>
<path d="M895.5,1019.7 L938.2,1002.3 L907.3,993.9 Z" fill="#d2f1d9" fill-opacity="0.62"/>
<path d="M881.6,1028.1 L876.9,1032.4 L890.4,1036.1 Z" fill="#d2f1d9" fill-opacity="0.56"/>
<path d="M555.9,1031.9 L530.9,1039.2 L530.2,1049.9 Z" fill="#d2f1d9" fill-opacity="0.71"/>
<path d="M120.9,929.6 L128.0,950.6 L117.4,950.5 Z" fill="#d2f1d9" fill-opacity="0.68"/>
<path d="M1178.4,1033.7 L1149.4,1029.8 L1147.7,1051.0 Z" fill="#d2f1d9" fill-opacity="0.67"/>
<path d="M659.3,1021.8 L676.5,1050.2 L674.6,1031.6 Z" fill="#bce0c5" fill-opacity="0.60"/>
<path d="M318.4,923.5 L336.4,936.9 L326.4,937.7 Z" fill="#d2f1d9" fill-opacity="0.72"/>
<path d="M623.2,1014.3 L603.9,999.5 L639.0,1000.0 Z" fill="#cfefd6" fill-opacity="0.62"/>
<path d="M823.5,996.7 L867.6,999.7 L859.8,1015.3 Z" fill="#bfe3c8" fill-opacity="0.68"/>
<path d="M579.6,953.0 L566.1,951.6 L560.8,935.2 Z" fill="#c2e6cb" fill-opacity="0.75"/>
<path d="M890.6,1026.6 L916.6,1005.6 L938.4,1015.7 Z" fill="#cfefd6" fill-opacity="0.57"/>
<path d="M759.3,972.8 L778.0,973.3 L797.2,979.7 Z" fill="#cfefd6" fill-opacity="0.53"/>
<path d="M1228.1,908.5 L1261.7,916.9 L1266.2,932.0 Z" fill="#bfe3c8" fill-opacity="0.81"/>
<path d="M1017.1,994.0 L1043.6,988.3 L1012.2,998.3 Z" fill="#c2e6cb" fill-opacity="0.70"/>
<path d="M316.7,898.5 L338.0,903.0 L353.2,902.9 Z" fill="#bce0c5" fill-opacity="0.78"/>
<path d="M776.0,926.6 L747.1,942.6 L763.1,929.4 Z" fill="#cfefd6" fill-opacity="0.52"/>
<path d="M378.6,995.0 L393.2,997.4 L366.1,1003.2 Z" fill="#bce0c5" fill-opacity="0.63"/>
<path d="M302.0,1011.2 L305.5,1041.3 L268.5,1031.6 Z" fill="#d6f3dd" fill-opacity="0.58"/>
<path d="M784.2,953.3 L806.5,934.0 L769.9,929.0 Z" fill="#bfe3c8" fill-opacity="0.86"/>
<path d="M537.4,935.9 L563.7,930.8 L542.6,940.2 Z" fill="#d2f1d9" fill-opacity="0.52"/>
<path d="M1032.1,907.9 L1021.8,920.0 L1045.5,905.1 Z" fill="#d6f3dd" fill-opacity="0.55"/>
<path d="M872.5,913.3 L857.4,907.9 L887.6,916.5 Z" fill="#d2f1d9" fill-opacity="0.68"/>
<path d="M316.3,961.8 L310.3,960.0 L324.3,981.4 Z" fill="#d6f3dd" fill-opacity="0.87"/>
<path d="M480.8,1045.8 L471.7,1004.9 L514.9,1000.3 Z" fill="#bfe3c8" fill-opacity="0.53"/>
<path d="M822.6,946.5 L812.5,954.6 L828.7,944.6 Z" fill="#c2e6cb" fill-opacity="0.76"/>
<path d="M949.8,991.4 L947.6,1024.5 L948.3,983.0 Z" fill="#bce0c5" fill-opacity="0.57"/>
<path d="M567.9,1018.6 L542.7,1001.1 L552.5,1001.0 Z" fill="#d2f1d9" fill-opacity="0.79"/>
<path d="M920.1,1027.6 L913.5,1024.5 L960.0,1021.0 Z" fill="#bfe3c8" fill-opacity="0.86"/>
<path d="M640.6,963.8 L632.4,976.5 L657.9,978.9 Z" fill="#d6f3dd" fill-opacity="0.51"/>
<path d="M632.4,891.6 L652.9,930.0 L648.0,896.8 Z" fill="#d2f1d9" fill-opacity="0.84"/>
<path d="M384.9,957.2 L376.6,970.9 L399.9,964.9 Z" fill="#bce0c5" fill-opacity="0.83"/>
<path d="M665.7,981.6 L626.4,1007.8 L694.9,994.3 Z" fill="#c2e6cb" fill-opacity="0.71"/>
<path d="M97.1,965.8 L131.2,943.2 L111.4,945.0 Z" fill="#bce0c5" fill-opacity="0.71"/>
<path d="M20.3,931.0 L13.9,919.8 L1.6,919.9 Z" fill="#bce0c5" fill-opacity="0.89"/>
<path d="M1050.5,1007.8 L1029.5,1034.5 L1064.9,1047.1 Z" fill="#cfefd6" fill-opacity="0.64"/>
<path d="M1239.5,1016.1 L1241.0,1012.9 L1227.1,1003.6 Z" fill="#bfe3c8" fill-opacity="0.86"/>
<path d="M203.5,939.7 L235.6,948.4 L207.1,948.2 Z" fill="#cfefd6" fill-opacity="0.76"/>
<path d="M1089.7,1012.6 L1075.0,1014.8 L1092.0,1011.8 Z" fill="#d2f1d9" fill-opacity="0.86"/>
<path d="M748.1,1032.2 L756.9,1048.2 L775.6,1035.2 Z" fill="#d6f3dd" fill-opacity="0.66"/>
<path d="M27.5,961.5 L15.7,977.2 L14.0,974.1 Z" fill="#c2e6cb" fill-opacity="0.50"/>
<path d="M1212.7,1014.4 L1211.0,1022.7 L1199.2,1012.2 Z" fill="#cfefd6" fill-opacity="0.61"/>
<path d="M519.8,1038.1 L524.6,1029.0 L490.4,1028.5 Z" fill="#bfe3c8" fill-opacity="0.60"/>
<path d="M-16.2,958.4 L-1.2,970.0 L27.4,938.7 Z" fill="#bfe3c8" fill-opacity="0.84"/>
<path d="M474.4,981.4 L481.8,958.7 L480.1,946.7 Z" fill="#c2e6cb" fill-opacity="0.56"/>
<path d="M1237.1,1025.1 L1273.8,1011.8 L1273.3,1007.3 Z" fill="#c2e6cb" fill-opacity="0.67"/>
<path d="M978.5,994.7 L992.9,949.6 L955.3,994.5 Z" fill="#bfe3c8" fill-opacity="0.54"/>
<path d="M200.6,1002.2 L181.5,1007.9 L209.6,999.0 Z" fill="#c2e6cb" fill-opacity="0.64"/>
<path d="M1193.7,1034.0 L1197.2,1026.8 L1185.1,1030.6 Z" fill="#bce0c5" fill-opacity="0.84"/>
<path d="M987.7,1000.3 L985.0,996.5 L1002.6,987.5 Z" fill="#d2f1d9" fill-opacity="0.56"/>
<path d="M765.1,1006.3 L787.7,1000.8 L785.5,1003.4 Z" fill="#d2f1d9" fill-opacity="0.82"/>
<path d="M793.4,1026.7 L781.1,1030.4 L791.9,1010.7 Z" fill="#d6f3dd" fill-opacity="0.80"/>
<path d="M1069.5,933.1 L1046.8,926.3 L1063.8,939.0 Z" fill="#cfefd6" fill-opacity="0.83"/>
<path d="M641.0,1026.6 L641.5,1032.7 L645.7,1024.6 Z" fill="#bfe3c8" fill-opacity="0.80"/>
<path d="M731.6,966.6 L719.7,972.7 L747.3,958.5 Z" fill="#d6f3dd" fill-opacity="0.63"/>
<path d="M145.4,925.1 L169.0,925.9 L168.3,915.5 Z" fill="#bce0c5" fill-opacity="0.76"/>
<path d="M409.6,966.6 L369.1,962.3 L373.1,956.0 Z" fill="#d6f3dd" fill-opacity="0.74"/>
<path d="M637.9,899.7 L664.7,914.3 L633.7,893.8 Z" fill="#d2f1d9" fill-opacity="0.62"/>
<path d="M295.0,991.6 L308.0,984.3 L322.1,962.1 Z" fill="#bfe3c8" fill-opacity="0.71"/>
<path d="M418.8,1038.0 L420.5,1036.8 L421.7,1029.8 Z" fill="#cfefd6" fill-opacity="0.79"/>
<path d="M584.1,944.4 L584.2,939.1 L606.9,937.7 Z" fill="#c2e6cb" fill-opacity="0.61"/>
<path d="M6.9,954.7 L41.2,992.8 L-8.0,1007.1 Z" fill="#bce0c5" fill-opacity="0.84"/>
<path d="M906.3,1001.2 L902.3,1005.9 L902.0,1005.2 Z" fill="#c2e6cb" fill-opacity="0.65"/>
<path d="M391.2,920.8 L401.0,906.6 L354.3,936.3 Z" fill="#d2f1d9" fill-opacity="0.71"/>
<path d="M20.0,1026.2 L-0.3,1003.2 L10.1,1019.6 Z" fill="#c2e6cb" fill-opacity="0.66"/>
<path d="M740.0,920.4 L738.1,893.7 L743.7,897.7 Z" fill="#d6f3dd" fill-opacity="0.72"/>
<path d="M975.3,980.1 L1001.9,1008.5 L996.0,957.0 Z" fill="#d2f1d9" fill-opacity="0.55"/>
<path d="M62.0,990.6 L57.1,1015.2 L70.9,1004.5 Z" fill="#c2e6cb" fill-opacity="0.62"/>
<path d="M1036.9,965.5 L1000.3,973.3 L1053.0,948.0 Z" fill="#d6f3dd" fill-opacity="0.86"/>
<path d="M953.3,908.2 L961.9,941.9 L948.6,909.1 Z" fill="#c2e6cb" fill-opacity="0.76"/>
<path d="M988.1,978.3 L999.7,954.9 L985.5,969.0 Z" fill="#d6f3dd" fill-opacity="0.84"/>
<path d="M174.6,945.5 L179.3,962.2 L193.9,962.9 Z" fill="#bfe3c8" fill-opacity="0.56"/>
<path d="M659.6,928.8 L668.8,928.2 L650.6,925.3 Z" fill="#cfefd6" fill-opacity="0.82"/>
<path d="M1227.9,1014.7 L1254.3,1048.8 L1265.6,1011.6 Z" fill="#cfefd6" fill-opacity="0.59"/>
<path d="M280.6,910.6 L302.9,931.5 L274.6,906.2 Z" fill="#bce0c5" fill-opacity="0.76"/>
<path d="M486.3,1003.5 L472.0,957.2 L514.9,971.6 Z" fill="#c2e6cb" fill-opacity="0.57"/>
<path d="M186.9,988.5 L202.4,997.9 L171.6,992.0 Z" fill="#d2f1d9" fill-opacity="0.70"/>
<path d="M342.3,1020.3 L359.3,1017.5 L345.4,1043.5 Z" fill="#c2e6cb" fill-opacity="0.64"/>
<path d="M339.7,961.7 L341.9,976.0 L352.9,960.3 Z" fill="#bfe3c8" fill-opacity="0.73"/>
<path d="M702.3,946.0 L707.9,945.5 L706.5,954.5 Z" fill="#cfefd6" fill-opacity="0.74"/>
<path d="M874.2,956.9 L825.0,992.1 L839.8,993.9 Z" fill="#c2e6cb" fill-opacity="0.78"/>
<path d="M447.6,970.5 L437.1,972.4 L447.1,979.4 Z" fill="#d6f3dd" fill-opacity="0.60"/>
<path d="M86.4,1032.1 L78.8,1003.6 L88.1,1021.3 Z" fill="#bfe3c8" fill-opacity="0.70"/>
<path d="M477.2,1056.5 L512.7,1029.2 L524.9,1033.1 Z" fill="#cfefd6" fill-opacity="0.55"/>
<path d="M253.1,1012.2 L243.5,1013.1 L261.7,1023.3 Z" fill="#d6f3dd" fill-opacity="0.89"/>
<path d="M953.0,972.3 L954.3,963.7 L967.0,947.6 Z" fill="#bce0c5" fill-opacity="0.72"/>
<path d="M1169.9,1016.9 L1162.5,1026.2 L1178.1,1029.8 Z" fill="#bce0c5" fill-opacity="0.65"/>
<path d="M459.5,948.9 L483.8,928.7 L427.0,914.2 Z" fill="#d2f1d9" fill-opacity="0.84"/>
<path d="M1157.9,984.9 L1186.3,949.8 L1176.9,968.9 Z" fill="#d6f3dd" fill-opacity="0.66"/>
<path d="M1145.2,993.6 L1139.5,964.1 L1148.0,957.4 Z" fill="#bce0c5" fill-opacity="0.72"/>
<path d="M1272.9,907.4 L1249.8,914.8 L1228.4,917.7 Z" fill="#bce0c5" fill-opacity="0.51"/>
<path d="M1139.1,955.4 L1140.5,949.9 L1142.8,962.8 Z" fill="#bce0c5" fill-opacity="0.87"/>
<path d="M675.1,1008.3 L691.6,1034.9 L678.3,1051.5 Z" fill="#c2e6cb" fill-opacity="0.90"/>
<path d="M1062.0,989.9 L1081.7,982.3 L1085.6,988.2 Z" fill="#cfefd6" fill-opacity="0.53"/>
<path d="M886.2,1004.0 L896.8,1035.8 L872.3,1002.3 Z" fill="#d2f1d9" fill-opacity="0.80"/>
<path d="M405.0,996.2 L365.2,1049.7 L407.9,999.8 Z" fill="#c2e6cb" fill-opacity="0.82"/>
<path d="M31.1,1040.7 L56.8,1046.2 L53.1,1039.5 Z" fill="#bfe3c8" fill-opacity="0.59"/>
<path d="M751.8,1034.7 L754.9,1030.7 L737.9,1054.3 Z" fill="#d6f3dd" fill-opacity="0.59"/>
<path d="M1138.1,890.7 L1179.1,875.3 L1195.9,880.0 Z" fill="#d2f1d9" fill-opacity="0.88"/>
<path d="M252.5,959.5 L269.0,952.0 L255.9,955.4 Z" fill="#cfefd6" fill-opacity="0.67"/>
<path d="M587.3,910.7 L601.4,917.2 L595.6,912.3 Z" fill="#bfe3c8" fill-opacity="0.76"/>
<path d="M263.7,978.9 L254.4,992.6 L264.4,978.6 Z" fill="#d6f3dd" fill-opacity="0.74"/>
<path d="M194.5,956.0 L201.1,943.4 L191.3,914.1 Z" fill="#d6f3dd" fill-opacity="0.68"/>
<path d="M447.1,968.9 L465.4,963.4 L460.9,960.8 Z" fill="#bfe3c8" fill-opacity="0.60"/>
<path d="M673.9,905.4 L698.9,924.0 L661.4,920.1 Z" fill="#bce0c5" fill-opacity="0.90"/>
<path d="M842.1,927.7 L796.5,945.5 L825.8,906.4 Z" fill="#cfefd6" fill-opacity="0.80"/>
<path d="M826.7,962.9 L821.4,958.8 L827.3,942.5 Z" fill="#bfe3c8" fill-opacity="0.75"/>
<path d="M780.1,925.0 L816.1,946.9 L811.0,919.5 Z" fill="#d6f3dd" fill-opacity="0.68"/>
<path d="M210.3,914.7 L239.3,924.1 L250.2,900.0 Z" fill="#cfefd6" fill-opacity="0.77"/>
<path d="M550.4,998.3 L522.7,1024.3 L550.7,1043.7 Z" fill="#d6f3dd" fill-opacity="0.65"/>
<path d="M291.1,903.2 L312.8,939.1 L267.7,897.8 Z" fill="#bce0c5" fill-opacity="0.79"/>
<path d="M22.3,918.3 L29.4,913.7 L25.7,907.6 Z" fill="#cfefd6" fill-opacity="0.60"/>
<path d="M275.0,936.7 L290.7,923.5 L287.4,904.9 Z" fill="#bce0c5" fill-opacity="0.54"/>
<path d="M245.5,920.9 L225.3,942.8 L215.0,933.5 Z" fill="#bce0c5" fill-opacity="0.61"/>
<path d="M448.2,991.0 L415.3,973.0 L445.9,969.6 Z" fill="#cfefd6" fill-opacity="0.59"/>
<path d="M348.5,921.2 L348.7,927.4 L353.3,937.3 Z" fill="#cfefd6" fill-opacity="0.85"/>
<path d="M494.4,1004.4 L481.6,993.0 L472.6,1000.1 Z" fill="#c2e6cb" fill-opacity="0.85"/>
<path d="M690.1,1021.4 L667.3,1020.3 L662.7,1027.6 Z" fill="#bfe3c8" fill-opacity="0.62"/>
<path d="M393.2,907.5 L388.7,906.9 L362.2,935.8 Z" fill="#c2e6cb" fill-opacity="0.76"/>
<path d="M213.2,1022.2 L232.1,1034.3 L230.4,1026.7 Z" fill="#bfe3c8" fill-opacity="0.69"/>
<path d="M55.6,925.9 L33.7,938.3 L32.9,933.1 Z" fill="#cfefd6" fill-opacity="0.65"/>
<path d="M845.8,943.8 L833.8,940.7 L804.6,942.1 Z" fill="#bce0c5" fill-opacity="0.66"/>
<path d="M468.4,881.4 L422.4,889.3 L443.2,935.6 Z" fill="#bfe3c8" fill-opacity="0.53"/>
<path d="M729.9,995.2 L743.8,995.2 L718.0,974.4 Z" fill="#c2e6cb" fill-opacity="0.58"/>
<path d="M1000.5,950.4 L996.0,942.0 L1002.0,950.7 Z" fill="#bfe3c8" fill-opacity="0.77"/>
<path d="M1074.6,909.2 L1097.4,933.0 L1103.1,940.1 Z" fill="#c2e6cb" fill-opacity="0.86"/>
<path d="M695.6,1018.0 L694.8,1027.3 L707.4,1051.6 Z" fill="#d6f3dd" fill-opacity="0.74"/>
<path d="M1117.6,964.9 L1099.6,988.8 L1140.2,962.7 Z" fill="#c2e6cb" fill-opacity="0.59"/>
<path d="M363.6,1010.5 L295.3,995.7 L315.5,993.0 Z" fill="#bce0c5" fill-opacity="0.59"/>
<path d="M453.4,998.1 L458.9,985.4 L440.9,988.7 Z" fill="#cfefd6" fill-opacity="0.78"/>
<path d="M241.6,1042.7 L227.3,1041.2 L228.6,1026.5 Z" fill="#d6f3dd" fill-opacity="0.73"/>
<path d="M885.8,1028.6 L848.1,1031.7 L885.7,1042.1 Z" fill="#bce0c5" fill-opacity="0.65"/>
<path d="M1047.8,959.8 L1061.4,967.0 L1056.8,967.7 Z" fill="#bfe3c8" fill-opacity="0.68"/>
<path d="M1075.7,1019.2 L1049.0,1011.9 L1034.7,1050.6 Z" fill="#bce0c5" fill-opacity="0.57"/>
<path d="M253.3,944.5 L246.0,944.3 L277.8,968.7 Z" fill="#d2f1d9" fill-opacity="0.72"/>
<path d="M520.4,971.9 L563.5,970.9 L554.3,957.3 Z" fill="#bfe3c8" fill-opacity="0.83"/>
<path d="M429.8,946.0 L453.8,959.8 L431.1,955.5 Z" fill="#bfe3c8" fill-opacity="0.79"/><path d="M2921.3,1180.5 L2939.0,1176.9 L2927.4,1175.5 Z" fill="#cfefd6" fill-opacity="0.77"/>
<path d="M3034.4,1086.2 L3000.7,1109.7 L3009.6,1107.8 Z" fill="#d6f3dd" fill-opacity="0.69"/>
<path d="M1812.4,1016.1 L1791.0,984.4 L1797.6,991.1 Z" fill="#bce0c5" fill-opacity="0.77"/>
<path d="M1586.1,1180.2 L1588.1,1173.8 L1560.0,1184.3 Z" fill="#d2f1d9" fill-opacity="0.88"/>
<path d="M1938.6,1103.3 L1953.6,1114.8 L1971.7,1121.9 Z" fill="#c2e6cb" fill-opacity="0.64"/>
<path d="M2535.4,1080.3 L2543.2,1076.1 L2546.2,1067.4 Z" fill="#d6f3dd" fill-opacity="0.62"/>
<path d="M2935.9,1111.2 L2939.6,1097.0 L2919.7,1105.4 Z" fill="#cfefd6" fill-opacity="0.85"/>
<path d="M2638.0,1011.4 L2620.7,1003.1 L2619.3,1003.4 Z" fill="#d2f1d9" fill-opacity="0.80"/>
<path d="M1521.4,955.5 L1518.2,994.8 L1459.1,972.4 Z" fill="#bfe3c8" fill-opacity="0.53"/>
<path d="M2899.0,899.5 L2950.3,894.4 L2909.5,922.1 Z" fill="#bfe3c8" fill-opacity="0.82"/>
<path d="M1696.8,1182.2 L1692.2,1175.6 L1685.9,1176.0 Z" fill="#cfefd6" fill-opacity="0.80"/>
<path d="M2852.4,1117.3 L2817.7,1128.2 L2824.3,1095.8 Z" fill="#bfe3c8" fill-opacity="0.71"/>
<path d="M2640.5,1037.4 L2614.6,1058.8 L2631.2,1049.6 Z" fill="#cfefd6" fill-opacity="0.52"/>
<path d="M1313.0,950.8 L1323.3,960.8 L1323.6,944.3 Z" fill="#c2e6cb" fill-opacity="0.53"/>
<path d="M1643.4,1137.7 L1638.6,1140.8 L1631.1,1123.6 Z" fill="#bce0c5" fill-opacity="0.79"/>
<path d="M1664.7,925.5 L1674.6,932.3 L1667.4,937.1 Z" fill="#bfe3c8" fill-opacity="0.79"/>
<path d="M1988.0,1046.0 L2014.8,1035.3 L1990.4,1063.4 Z" fill="#bce0c5" fill-opacity="0.88"/>
<path d="M1485.8,999.1 L1482.2,1004.3 L1434.0,993.6 Z" fill="#d2f1d9" fill-opacity="0.82"/>
<path d="M1375.0,1089.9 L1330.9,1066.3 L1345.9,1094.3 Z" fill="#c2e6cb" fill-opacity="0.58"/>
<path d="M2268.6,1011.7 L2237.0,1000.8 L2235.0,1029.9 Z" fill="#d2f1d9" fill-opacity="0.78"/>
<path d="M1308.5,1091.4 L1283.8,1089.2 L1313.6,1079.1 Z" fill="#c2e6cb" fill-opacity="0.79"/>
<path d="M2540.4,1019.2 L2513.4,1027.6 L2533.6,1031.6 Z" fill="#d2f1d9" fill-opacity="0.73"/>
<path d="M2711.3,919.7 L2685.8,916.9 L2671.2,946.1 Z" fill="#cfefd6" fill-opacity="0.52"/>
<path d="M2988.6,1006.8 L2943.2,1004.7 L2942.2,1040.3 Z" fill="#d6f3dd" fill-opacity="0.54"/>
<path d="M2174.2,1106.2 L2166.8,1104.5 L2178.1,1116.1 Z" fill="#d2f1d9" fill-opacity="0.69"/>
<path d="M2526.0,1130.3 L2494.9,1125.9 L2504.0,1142.6 Z" fill="#bce0c5" fill-opacity="0.69"/>
<path d="M2953.5,1012.4 L2966.2,984.1 L2951.1,993.5 Z" fill="#cfefd6" fill-opacity="0.87"/>
<path d="M1798.2,1033.9 L1770.4,1047.4 L1779.6,1057.3 Z" fill="#bfe3c8" fill-opacity="0.85"/>
<path d="M1406.7,1148.9 L1432.6,1119.3 L1447.2,1116.4 Z" fill="#d6f3dd" fill-opacity="0.69"/>
<path d="M2183.8,967.4 L2144.1,974.9 L2155.8,962.8 Z" fill="#bce0c5" fill-opacity="0.69"/>
<path d="M2437.8,985.1 L2421.3,1007.7 L2424.9,1007.6 Z" fill="#d6f3dd" fill-opacity="0.60"/>
<path d="M2321.6,1140.8 L2381.9,1149.9 L2328.1,1129.7 Z" fill="#bfe3c8" fill-opacity="0.65"/>
<path d="M2215.0,1005.7 L2204.2,1012.6 L2198.8,1029.4 Z" fill="#c2e6cb" fill-opacity="0.62"/>
<path d="M2381.0,1146.7 L2362.8,1136.7 L2380.9,1131.7 Z" fill="#cfefd6" fill-opacity="0.75"/>
<path d="M1778.9,962.1 L1814.9,955.5 L1808.0,966.1 Z" fill="#c2e6cb" fill-opacity="0.64"/>
<path d="M1858.3,1006.0 L1820.1,1016.7 L1864.5,995.9 Z" fill="#bfe3c8" fill-opacity="0.54"/>
<path d="M1660.8,951.5 L1686.9,945.4 L1687.7,965.2 Z" fill="#bce0c5" fill-opacity="0.64"/>
<path d="M2806.2,1185.8 L2809.0,1177.5 L2815.6,1185.2 Z" fill="#cfefd6" fill-opacity="0.62"/>
<path d="M2340.9,1083.2 L2366.0,1089.6 L2344.5,1108.8 Z" fill="#c2e6cb" fill-opacity="0.55"/>
<path d="M1317.8,1017.8 L1310.9,1002.0 L1301.2,995.0 Z" fill="#d6f3dd" fill-opacity="0.72"/>
<path d="M2062.1,1159.8 L2096.0,1169.9 L2067.8,1147.2 Z" fill="#bfe3c8" fill-opacity="0.64"/>
<path d="M1674.3,967.0 L1699.4,952.5 L1663.1,989.3 Z" fill="#c2e6cb" fill-opacity="0.55"/>
<path d="M2182.0,1148.0 L2165.9,1161.3 L2165.8,1143.3 Z" fill="#d6f3dd" fill-opacity="0.72"/>
<path d="M2352.6,930.4 L2338.7,938.7 L2326.5,925.8 Z" fill="#bfe3c8" fill-opacity="0.68"/>
<path d="M2290.8,918.9 L2282.6,936.0 L2306.4,923.6 Z" fill="#d2f1d9" fill-opacity="0.57"/>
<path d="M1522.2,1098.0 L1495.4,1103.8 L1500.9,1094.1 Z" fill="#d2f1d9" fill-opacity="0.78"/>
<path d="M2177.2,932.4 L2195.3,919.9 L2189.9,913.1 Z" fill="#bce0c5" fill-opacity="0.55"/>
<path d="M1432.8,962.3 L1443.8,972.7 L1451.4,969.6 Z" fill="#bce0c5" fill-opacity="0.57"/>
<path d="M1418.5,1130.6 L1423.6,1133.2 L1431.3,1131.6 Z" fill="#d2f1d9" fill-opacity="0.72"/>
<path d="M2114.6,971.0 L2095.7,996.1 L2092.7,960.4 Z" fill="#d2f1d9" fill-opacity="0.58"/>
<path d="M1923.9,910.0 L1946.0,917.1 L1946.5,925.2 Z" fill="#bfe3c8" fill-opacity="0.74"/>
<path d="M1321.3,961.5 L1307.8,971.4 L1331.5,970.0 Z" fill="#c2e6cb" fill-opacity="0.89"/>
<path d="M1551.7,997.8 L1497.1,1019.0 L1539.0,970.7 Z" fill="#bfe3c8" fill-opacity="0.75"/>
<path d="M2540.3,1167.5 L2548.0,1174.1 L2548.5,1180.0 Z" fill="#bfe3c8" fill-opacity="0.78"/>
<path d="M2626.2,1030.6 L2621.6,1019.5 L2632.6,1019.5 Z" fill="#bce0c5" fill-opacity="0.64"/>
<path d="M1372.9,1022.3 L1383.6,1013.2 L1352.6,1030.1 Z" fill="#cfefd6" fill-opacity="0.83"/>
<path d="M1754.6,897.7 L1763.4,894.4 L1792.8,899.4 Z" fill="#c2e6cb" fill-opacity="0.69"/>
<path d="M2486.4,969.8 L2517.8,994.9 L2510.0,982.6 Z" fill="#bfe3c8" fill-opacity="0.70"/>
<path d="M2652.9,1176.3 L2673.2,1156.5 L2666.0,1173.9 Z" fill="#cfefd6" fill-opacity="0.66"/>
<path d="M1952.7,1076.2 L1990.5,1097.6 L1983.9,1070.4 Z" fill="#c2e6cb" fill-opacity="0.69"/>
<path d="M1919.9,975.2 L1903.7,978.9 L1925.1,952.8 Z" fill="#d6f3dd" fill-opacity="0.59"/>
<path d="M1749.6,1007.9 L1711.1,1006.7 L1739.0,1000.3 Z" fill="#bfe3c8" fill-opacity="0.55"/>
<path d="M1505.8,1002.4 L1523.5,978.8 L1502.7,978.1 Z" fill="#d6f3dd" fill-opacity="0.78"/>
<path d="M1292.0,1051.5 L1319.9,1055.6 L1293.9,1045.4 Z" fill="#d6f3dd" fill-opacity="0.65"/>
<path d="M2944.9,1085.5 L2949.8,1058.7 L2906.5,1103.6 Z" fill="#bce0c5" fill-opacity="0.89"/>
<path d="M2202.4,919.7 L2207.2,915.9 L2174.8,903.8 Z" fill="#d2f1d9" fill-opacity="0.74"/>
<path d="M2938.3,1159.0 L2922.6,1126.6 L2968.8,1158.6 Z" fill="#c2e6cb" fill-opacity="0.54"/>
<path d="M2289.1,909.5 L2297.1,924.1 L2292.5,928.6 Z" fill="#bce0c5" fill-opacity="0.90"/>
<path d="M2847.5,1005.8 L2886.9,1001.6 L2902.0,1008.6 Z" fill="#d6f3dd" fill-opacity="0.74"/>
<path d="M2695.3,1170.0 L2712.8,1136.9 L2683.4,1138.5 Z" fill="#c2e6cb" fill-opacity="0.73"/>
<path d="M1686.9,1021.0 L1676.7,1040.2 L1713.3,1043.0 Z" fill="#d2f1d9" fill-opacity="0.67"/>
<path d="M2887.3,897.5 L2871.8,909.8 L2885.8,913.1 Z" fill="#cfefd6" fill-opacity="0.60"/>
<path d="M2759.3,945.7 L2726.1,956.1 L2731.6,965.2 Z" fill="#d6f3dd" fill-opacity="0.55"/>
<path d="M2325.4,1100.2 L2297.1,1086.3 L2315.6,1089.4 Z" fill="#bce0c5" fill-opacity="0.64"/>
<path d="M1503.0,1093.0 L1538.0,1107.9 L1502.9,1113.0 Z" fill="#d6f3dd" fill-opacity="0.62"/>
<path d="M2500.1,1164.3 L2510.9,1170.3 L2491.8,1164.2 Z" fill="#d6f3dd" fill-opacity="0.74"/>
<path d="M2528.0,931.8 L2547.4,950.0 L2570.0,952.4 Z" fill="#bfe3c8" fill-opacity="0.64"/>
<path d="M1752.1,939.8 L1792.9,950.4 L1751.8,943.7 Z" fill="#d2f1d9" fill-opacity="0.59"/>
<path d="M2341.1,954.2 L2336.9,950.8 L2318.6,952.1 Z" fill="#d2f1d9" fill-opacity="0.64"/>
<path d="M1907.2,1140.6 L1913.6,1114.6 L1902.0,1125.7 Z" fill="#bfe3c8" fill-opacity="0.70"/>
<path d="M1527.5,1006.9 L1519.2,1027.9 L1555.9,1033.7 Z" fill="#cfefd6" fill-opacity="0.55"/>
<path d="M1609.5,1109.5 L1612.3,1098.1 L1617.0,1110.6 Z" fill="#bfe3c8" fill-opacity="0.62"/>
<path d="M2269.1,1030.8 L2264.4,1048.1 L2253.6,1050.1 Z" fill="#bfe3c8" fill-opacity="0.85"/>
<path d="M2211.8,1150.7 L2227.3,1165.8 L2200.9,1138.0 Z" fill="#d2f1d9" fill-opacity="0.73"/>
<path d="M2062.3,967.0 L2057.5,955.4 L2069.6,963.9 Z" fill="#cfefd6" fill-opacity="0.54"/>
<path d="M1578.7,1128.7 L1580.5,1122.9 L1596.4,1145.6 Z" fill="#cfefd6" fill-opacity="0.75"/>
<path d="M1848.6,1178.6 L1837.2,1150.8 L1877.4,1187.3 Z" fill="#d2f1d9" fill-opacity="0.55"/>
<path d="M2547.7,1172.5 L2521.8,1188.9 L2577.4,1163.6 Z" fill="#d2f1d9" fill-opacity="0.64"/>
<path d="M2741.4,961.5 L2740.2,935.7 L2756.3,951.4 Z" fill="#d2f1d9" fill-opacity="0.82"/>
<path d="M2972.7,1160.0 L2962.1,1175.8 L2986.2,1152.5 Z" fill="#d2f1d9" fill-opacity="0.71"/>
<path d="M1471.0,1140.4 L1465.2,1155.1 L1461.1,1152.0 Z" fill="#d2f1d9" fill-opacity="0.53"/>
<path d="M2723.4,1112.2 L2725.0,1109.9 L2711.6,1109.0 Z" fill="#c2e6cb" fill-opacity="0.77"/>
<path d="M2042.0,983.5 L2042.2,1000.4 L2048.5,988.2 Z" fill="#bfe3c8" fill-opacity="0.56"/>
<path d="M2916.1,1149.2 L2911.4,1157.6 L2934.1,1141.1 Z" fill="#bce0c5" fill-opacity="0.54"/>
<path d="M1320.2,1036.7 L1319.9,1018.7 L1320.1,1036.4 Z" fill="#cfefd6" fill-opacity="0.88"/>
<path d="M1813.5,1059.6 L1783.9,1059.9 L1802.5,1061.0 Z" fill="#d6f3dd" fill-opacity="0.71"/>
<path d="M2247.7,1005.7 L2272.4,995.2 L2250.0,1003.7 Z" fill="#c2e6cb" fill-opacity="0.71"/>
<path d="M1722.4,1168.3 L1727.1,1164.9 L1740.4,1167.2 Z" fill="#bfe3c8" fill-opacity="0.85"/>
<path d="M1765.0,1027.3 L1771.2,1055.1 L1795.5,1030.6 Z" fill="#c2e6cb" fill-opacity="0.72"/>
<path d="M1801.4,1207.7 L1810.7,1191.1 L1803.5,1187.3 Z" fill="#c2e6cb" fill-opacity="0.74"/>
<path d="M1529.5,1101.3 L1494.0,1087.2 L1532.8,1115.1 Z" fill="#cfefd6" fill-opacity="0.52"/>
<path d="M1831.7,1038.4 L1831.9,1031.5 L1831.4,1037.7 Z" fill="#bce0c5" fill-opacity="0.59"/>
<path d="M1930.2,1092.7 L1929.0,1089.6 L1933.2,1095.8 Z" fill="#cfefd6" fill-opacity="0.73"/>
<path d="M1299.4,1024.9 L1285.5,1036.3 L1319.4,1015.7 Z" fill="#d2f1d9" fill-opacity="0.84"/>
<path d="M1410.1,925.7 L1387.0,896.7 L1374.5,895.2 Z" fill="#d2f1d9" fill-opacity="0.87"/>
<path d="M2842.5,942.8 L2826.7,922.2 L2855.7,954.8 Z" fill="#cfefd6" fill-opacity="0.85"/>
<path d="M2236.0,948.4 L2246.8,948.6 L2268.8,948.1 Z" fill="#bfe3c8" fill-opacity="0.73"/>
<path d="M2409.3,969.9 L2362.6,999.1 L2370.0,964.9 Z" fill="#bfe3c8" fill-opacity="0.58"/>
<path d="M1949.2,900.1 L1926.2,907.1 L1947.4,900.3 Z" fill="#d6f3dd" fill-opacity="0.89"/>
<path d="M3004.2,1041.4 L3015.1,1044.8 L3005.2,1056.6 Z" fill="#cfefd6" fill-opacity="0.57"/>
<path d="M2288.2,1146.3 L2292.9,1143.8 L2306.7,1165.3 Z" fill="#bfe3c8" fill-opacity="0.67"/>
<path d="M1588.5,1003.6 L1602.2,994.9 L1582.9,1014.3 Z" fill="#bfe3c8" fill-opacity="0.58"/>
<path d="M1335.1,1019.4 L1327.5,1010.4 L1343.6,1026.6 Z" fill="#d6f3dd" fill-opacity="0.75"/>
<path d="M2897.1,1139.4 L2946.1,1135.1 L2891.1,1129.1 Z" fill="#bce0c5" fill-opacity="0.86"/>
<path d="M1452.9,1174.4 L1453.3,1173.8 L1465.6,1194.0 Z" fill="#cfefd6" fill-opacity="0.82"/>
<path d="M2023.0,933.5 L2039.6,921.9 L2072.6,894.6 Z" fill="#d2f1d9" fill-opacity="0.57"/>
<path d="M1616.5,1052.7 L1575.2,1031.6 L1618.0,1017.6 Z" fill="#d2f1d9" fill-opacity="0.58"/>
<path d="M2130.4,944.9 L2093.1,920.1 L2111.4,953.6 Z" fill="#cfefd6" fill-opacity="0.85"/>
<path d="M2695.9,999.0 L2683.6,1021.7 L2668.2,1002.0 Z" fill="#bce0c5" fill-opacity="0.88"/>
<path d="M2008.8,985.9 L2012.8,960.1 L1965.7,949.5 Z" fill="#bfe3c8" fill-opacity="0.66"/>
<path d="M1988.9,1118.8 L1984.2,1097.3 L2031.5,1132.3 Z" fill="#bfe3c8" fill-opacity="0.56"/>
<path d="M3038.2,1101.4 L2985.5,1091.6 L2990.7,1102.4 Z" fill="#d2f1d9" fill-opacity="0.83"/>
<path d="M2903.3,965.5 L2925.5,984.2 L2878.6,962.1 Z" fill="#bce0c5" fill-opacity="0.88"/>
<path d="M1632.5,1031.4 L1634.1,1017.2 L1653.2,1033.7 Z" fill="#cfefd6" fill-opacity="0.57"/>
<path d="M1844.6,1132.6 L1832.3,1148.8 L1843.9,1132.6 Z" fill="#bfe3c8" fill-opacity="0.56"/>
<path d="M2877.4,1013.1 L2876.7,986.1 L2855.1,984.9 Z" fill="#d6f3dd" fill-opacity="0.74"/>
<path d="M2482.0,1074.2 L2478.4,1064.1 L2505.1,1067.1 Z" fill="#cfefd6" fill-opacity="0.61"/>
<path d="M2538.3,943.1 L2537.6,968.9 L2510.1,984.7 Z" fill="#c2e6cb" fill-opacity="0.85"/>
<path d="M1725.7,1089.7 L1718.5,1128.7 L1722.7,1147.5 Z" fill="#bce0c5" fill-opacity="0.64"/>
<path d="M2874.8,996.1 L2882.8,1008.7 L2862.1,1000.7 Z" fill="#cfefd6" fill-opacity="0.61"/>
<path d="M2249.6,1048.7 L2240.0,1047.0 L2274.6,1052.8 Z" fill="#c2e6cb" fill-opacity="0.69"/>
<path d="M2779.1,1075.4 L2816.7,1091.2 L2817.7,1068.3 Z" fill="#bce0c5" fill-opacity="0.64"/>
<path d="M1966.8,1101.6 L2001.2,1126.6 L1979.0,1138.3 Z" fill="#c2e6cb" fill-opacity="0.81"/>
<path d="M1967.7,963.8 L1941.2,963.9 L1934.4,993.1 Z" fill="#bfe3c8" fill-opacity="0.58"/>
<path d="M1830.0,979.0 L1819.9,973.2 L1808.1,976.6 Z" fill="#d6f3dd" fill-opacity="0.62"/>
<path d="M1746.9,1178.4 L1726.6,1156.5 L1729.7,1161.0 Z" fill="#c2e6cb" fill-opacity="0.66"/>
<path d="M2487.6,1119.7 L2522.4,1135.4 L2476.0,1146.5 Z" fill="#d6f3dd" fill-opacity="0.51"/>
<path d="M2185.1,1177.6 L2178.6,1148.7 L2196.2,1176.6 Z" fill="#c2e6cb" fill-opacity="0.82"/>
<path d="M1613.0,960.4 L1647.9,950.4 L1665.3,982.1 Z" fill="#c2e6cb" fill-opacity="0.71"/>
<path d="M2587.3,1022.3 L2564.5,1030.5 L2610.6,1047.6 Z" fill="#bfe3c8" fill-opacity="0.74"/>
<path d="M2158.3,989.1 L2171.1,990.1 L2150.6,992.5 Z" fill="#cfefd6" fill-opacity="0.83"/>
<path d="M2837.8,1059.5 L2824.7,1057.6 L2821.9,1069.6 Z" fill="#d2f1d9" fill-opacity="0.75"/>
<path d="M1402.0,1111.6 L1350.9,1100.3 L1412.9,1076.4 Z" fill="#d2f1d9" fill-opacity="0.66"/>
<path d="M2291.3,1123.6 L2313.5,1129.6 L2310.1,1116.9 Z" fill="#d2f1d9" fill-opacity="0.65"/>
<path d="M2538.1,1150.8 L2542.0,1153.7 L2537.2,1157.6 Z" fill="#d2f1d9" fill-opacity="0.58"/>
<path d="M1940.1,1030.9 L1902.0,1005.8 L1923.7,1017.4 Z" fill="#d2f1d9" fill-opacity="0.64"/>
<path d="M2084.1,1142.8 L2071.3,1139.9 L2057.2,1136.1 Z" fill="#bce0c5" fill-opacity="0.60"/>
<path d="M2705.0,960.1 L2699.2,955.1 L2708.1,978.5 Z" fill="#d6f3dd" fill-opacity="0.63"/>
<path d="M2946.3,939.2 L2948.3,922.5 L2942.3,934.3 Z" fill="#bce0c5" fill-opacity="0.54"/>
<path d="M2132.2,1032.3 L2120.3,1036.1 L2122.3,1043.1 Z" fill="#c2e6cb" fill-opacity="0.74"/>
<path d="M2588.9,1102.4 L2586.6,1122.0 L2576.1,1091.6 Z" fill="#d2f1d9" fill-opacity="0.75"/>
<path d="M1434.4,917.9 L1427.8,910.4 L1419.1,916.6 Z" fill="#d2f1d9" fill-opacity="0.81"/>
<path d="M1767.7,949.9 L1764.9,933.8 L1768.6,933.8 Z" fill="#cfefd6" fill-opacity="0.71"/>
<path d="M1821.1,918.6 L1868.9,902.7 L1849.7,912.9 Z" fill="#c2e6cb" fill-opacity="0.62"/>
<path d="M2111.3,1159.3 L2092.8,1178.4 L2092.4,1168.9 Z" fill="#c2e6cb" fill-opacity="0.75"/>
<path d="M2110.2,981.8 L2080.8,954.9 L2077.0,989.5 Z" fill="#c2e6cb" fill-opacity="0.69"/>
<path d="M2606.1,962.6 L2600.8,960.2 L2577.8,958.8 Z" fill="#cfefd6" fill-opacity="0.55"/>
<path d="M1348.6,1121.9 L1338.2,1121.6 L1339.2,1115.7 Z" fill="#bfe3c8" fill-opacity="0.83"/>
<path d="M1526.0,1139.3 L1515.0,1136.1 L1507.2,1139.0 Z" fill="#bce0c5" fill-opacity="0.68"/>
<path d="M1559.0,1143.3 L1556.9,1164.0 L1559.9,1140.9 Z" fill="#d6f3dd" fill-opacity="0.64"/>
<path d="M1780.7,1159.1 L1740.8,1183.5 L1715.8,1162.5 Z" fill="#c2e6cb" fill-opacity="0.80"/>
<path d="M2148.0,948.0 L2137.0,934.7 L2143.1,953.4 Z" fill="#c2e6cb" fill-opacity="0.55"/>
<path d="M1938.8,1107.5 L1914.2,1146.4 L1914.2,1087.6 Z" fill="#bfe3c8" fill-opacity="0.53"/>
<path d="M2615.8,1072.1 L2628.8,1114.7 L2621.5,1076.7 Z" fill="#c2e6cb" fill-opacity="0.83"/>
<path d="M2344.2,1104.8 L2352.2,1114.7 L2341.1,1121.5 Z" fill="#bce0c5" fill-opacity="0.79"/>
<path d="M2751.7,1090.3 L2719.1,1092.5 L2739.1,1096.4 Z" fill="#c2e6cb" fill-opacity="0.59"/>
<path d="M2795.5,1018.7 L2802.0,1046.9 L2843.6,1045.3 Z" fill="#c2e6cb" fill-opacity="0.68"/>
<path d="M2598.3,1092.7 L2588.5,1074.0 L2591.6,1074.1 Z" fill="#d2f1d9" fill-opacity="0.68"/>
<path d="M2608.3,1055.8 L2594.3,1030.4 L2621.6,1023.0 Z" fill="#d6f3dd" fill-opacity="0.61"/>
<path d="M2492.5,1148.2 L2504.9,1157.7 L2516.1,1157.5 Z" fill="#cfefd6" fill-opacity="0.57"/>
<path d="M2712.1,1099.9 L2698.1,1101.7 L2736.3,1104.0 Z" fill="#bfe3c8" fill-opacity="0.77"/>
<path d="M2679.4,1112.0 L2682.2,1131.2 L2682.2,1138.8 Z" fill="#bce0c5" fill-opacity="0.66"/>
<path d="M2973.2,1084.5 L2989.1,1078.8 L2998.1,1089.7 Z" fill="#c2e6cb" fill-opacity="0.63"/>
<path d="M1912.6,997.9 L1904.6,1013.1 L1914.1,1001.9 Z" fill="#cfefd6" fill-opacity="0.74"/>
<path d="M2349.0,932.4 L2341.7,939.5 L2355.7,932.3 Z" fill="#bfe3c8" fill-opacity="0.66"/>
<path d="M2363.5,927.4 L2355.7,910.0 L2348.2,917.5 Z" fill="#c2e6cb" fill-opacity="0.78"/>
<path d="M2819.2,1104.7 L2818.9,1122.9 L2811.7,1118.6 Z" fill="#bfe3c8" fill-opacity="0.58"/>
<path d="M2770.7,1066.1 L2760.9,1056.2 L2756.4,1051.0 Z" fill="#c2e6cb" fill-opacity="0.53"/>
<path d="M1471.8,1118.8 L1470.0,1130.3 L1469.0,1118.5 Z" fill="#cfefd6" fill-opacity="0.64"/>
<path d="M2189.0,1087.3 L2229.7,1077.9 L2230.8,1062.5 Z" fill="#d6f3dd" fill-opacity="0.69"/>
<path d="M2015.5,947.1 L1961.7,971.9 L1971.6,947.2 Z" fill="#bfe3c8" fill-opacity="0.69"/>
<path d="M2183.5,944.8 L2174.4,943.6 L2187.4,970.5 Z" fill="#bce0c5" fill-opacity="0.56"/>
<path d="M1725.2,1114.2 L1717.5,1113.5 L1701.4,1107.5 Z" fill="#d6f3dd" fill-opacity="0.57"/>
<path d="M2724.6,1118.5 L2760.8,1127.2 L2768.4,1093.9 Z" fill="#c2e6cb" fill-opacity="0.62"/>
<path d="M1824.3,1082.7 L1809.5,1079.6 L1819.9,1092.3 Z" fill="#c2e6cb" fill-opacity="0.68"/>
<path d="M1879.6,1141.7 L1904.9,1148.5 L1874.0,1159.3 Z" fill="#bfe3c8" fill-opacity="0.86"/>
<path d="M1236.0,917.0 L1241.8,934.7 L1246.9,920.8 Z" fill="#bce0c5" fill-opacity="0.78"/>
<path d="M1632.1,1026.2 L1618.0,1030.5 L1629.5,1016.5 Z" fill="#d2f1d9" fill-opacity="0.57"/>
<path d="M2643.2,1004.1 L2679.7,1013.0 L2639.4,1030.1 Z" fill="#c2e6cb" fill-opacity="0.69"/>
<path d="M2863.8,924.2 L2891.4,935.8 L2869.9,944.2 Z" fill="#c2e6cb" fill-opacity="0.88"/>
<path d="M1583.1,985.6 L1600.1,996.7 L1598.7,977.4 Z" fill="#bfe3c8" fill-opacity="0.54"/>
<path d="M1623.8,1010.1 L1656.1,1006.1 L1644.0,1024.5 Z" fill="#bce0c5" fill-opacity="0.71"/>
<path d="M2693.1,1076.2 L2691.2,1048.0 L2720.8,1079.2 Z" fill="#c2e6cb" fill-opacity="0.68"/>
<path d="M2267.6,981.5 L2290.0,976.1 L2279.9,976.3 Z" fill="#d6f3dd" fill-opacity="0.79"/>
<path d="M2364.6,988.4 L2374.3,983.2 L2374.7,975.4 Z" fill="#d6f3dd" fill-opacity="0.52"/>
<path d="M2934.3,1073.6 L2909.8,1099.6 L2966.9,1069.4 Z" fill="#bce0c5" fill-opacity="0.86"/>
<path d="M1831.8,984.7 L1823.2,966.5 L1833.0,982.7 Z" fill="#c2e6cb" fill-opacity="0.73"/>
<path d="M2818.3,948.9 L2793.6,902.6 L2800.2,921.2 Z" fill="#d6f3dd" fill-opacity="0.86"/>
<path d="M2726.1,1160.6 L2704.7,1168.5 L2734.4,1148.1 Z" fill="#d2f1d9" fill-opacity="0.83"/>
<path d="M2176.4,965.4 L2167.2,962.1 L2155.5,961.6 Z" fill="#cfefd6" fill-opacity="0.74"/>
<path d="M1499.7,1065.4 L1498.7,1041.4 L1523.1,1073.6 Z" fill="#bfe3c8" fill-opacity="0.82"/>
<path d="M2733.7,971.0 L2735.4,958.0 L2725.8,961.2 Z" fill="#d6f3dd" fill-opacity="0.89"/>
<path d="M2726.5,979.1 L2722.4,980.0 L2771.2,961.9 Z" fill="#d6f3dd" fill-opacity="0.75"/>
<path d="M1842.6,1144.3 L1829.6,1119.8 L1853.4,1112.0 Z" fill="#d6f3dd" fill-opacity="0.58"/>
<path d="M1930.8,1167.6 L1938.5,1153.2 L1976.6,1165.7 Z" fill="#d2f1d9" fill-opacity="0.58"/>
<path d="M1869.9,1136.6 L1820.4,1141.4 L1809.3,1130.9 Z" fill="#cfefd6" fill-opacity="0.51"/>
<path d="M2727.5,915.0 L2700.2,930.0 L2710.0,911.7 Z" fill="#bce0c5" fill-opacity="0.87"/>
<path d="M1717.0,961.6 L1681.1,954.7 L1700.0,949.3 Z" fill="#cfefd6" fill-opacity="0.56"/>
<path d="M1524.8,982.0 L1531.9,979.9 L1552.4,974.4 Z" fill="#d2f1d9" fill-opacity="0.87"/>
<path d="M2586.0,1011.3 L2615.5,1009.5 L2614.2,1012.0 Z" fill="#d2f1d9" fill-opacity="0.78"/>
<path d="M1446.0,917.9 L1463.4,949.5 L1469.8,923.1 Z" fill="#bfe3c8" fill-opacity="0.86"/>
<path d="M2850.1,1109.8 L2796.1,1114.5 L2838.3,1117.9 Z" fill="#d2f1d9" fill-opacity="0.68"/>
<path d="M1973.6,1176.7 L1967.7,1177.6 L1964.4,1168.3 Z" fill="#cfefd6" fill-opacity="0.59"/>
<path d="M1468.8,1145.2 L1494.3,1138.9 L1471.4,1138.3 Z" fill="#bce0c5" fill-opacity="0.73"/>
<path d="M2215.8,1004.6 L2235.2,1004.9 L2205.7,1009.0 Z" fill="#c2e6cb" fill-opacity="0.57"/>
<path d="M2774.8,1179.0 L2793.4,1177.3 L2784.3,1203.9 Z" fill="#bce0c5" fill-opacity="0.80"/>
<path d="M1786.1,1121.2 L1779.1,1113.0 L1765.1,1101.6 Z" fill="#c2e6cb" fill-opacity="0.63"/>
<path d="M2280.5,1104.3 L2250.8,1109.5 L2258.6,1113.1 Z" fill="#d2f1d9" fill-opacity="0.81"/>
<path d="M2347.1,1165.9 L2329.9,1174.1 L2353.6,1167.8 Z" fill="#c2e6cb" fill-opacity="0.85"/>
<path d="M2407.4,1008.4 L2465.0,997.4 L2422.8,993.3 Z" fill="#d6f3dd" fill-opacity="0.58"/>
<path d="M2580.0,930.4 L2577.0,889.1 L2575.6,894.0 Z" fill="#bfe3c8" fill-opacity="0.90"/>
<path d="M2253.5,1096.3 L2283.8,1096.3 L2252.2,1079.3 Z" fill="#d2f1d9" fill-opacity="0.87"/>
<path d="M2419.1,912.2 L2403.3,897.7 L2452.6,908.6 Z" fill="#bce0c5" fill-opacity="0.64"/>
<path d="M2704.2,1065.1 L2683.8,1070.6 L2696.5,1107.0 Z" fill="#bfe3c8" fill-opacity="0.52"/>
<path d="M2404.7,945.3 L2408.2,925.9 L2399.2,929.0 Z" fill="#d6f3dd" fill-opacity="0.59"/>
<path d="M2863.3,1125.3 L2870.8,1149.4 L2881.1,1125.2 Z" fill="#c2e6cb" fill-opacity="0.64"/>
<path d="M2523.4,970.9 L2524.9,1026.2 L2500.4,999.0 Z" fill="#d2f1d9" fill-opacity="0.60"/>
<path d="M1364.4,1094.6 L1370.5,1089.6 L1338.4,1074.1 Z" fill="#bce0c5" fill-opacity="0.80"/>
<path d="M2557.5,1201.1 L2523.9,1161.5 L2560.6,1189.1 Z" fill="#d2f1d9" fill-opacity="0.72"/>
<path d="M2492.8,1096.0 L2534.7,1080.6 L2519.9,1082.8 Z" fill="#d6f3dd" fill-opacity="0.59"/>
<path d="M2128.0,1020.2 L2082.5,1011.1 L2085.2,1056.0 Z" fill="#bfe3c8" fill-opacity="0.56"/>
<path d="M1439.1,1047.4 L1431.0,1039.7 L1486.5,1019.4 Z" fill="#cfefd6" fill-opacity="0.59"/>
<path d="M1633.8,1123.7 L1677.6,1099.2 L1619.8,1129.2 Z" fill="#c2e6cb" fill-opacity="0.66"/>
<path d="M2125.3,1023.1 L2128.9,1023.6 L2132.4,1033.2 Z" fill="#d6f3dd" fill-opacity="0.75"/>
<path d="M2656.5,1036.0 L2674.0,1027.1 L2676.0,990.6 Z" fill="#d6f3dd" fill-opacity="0.83"/>
<path d="M2287.2,944.4 L2302.3,952.4 L2302.3,928.3 Z" fill="#bfe3c8" fill-opacity="0.81"/>
<path d="M3016.1,1133.3 L3030.6,1113.1 L3038.6,1116.7 Z" fill="#c2e6cb" fill-opacity="0.79"/>
<path d="M1862.7,998.9 L1837.9,992.0 L1879.2,976.0 Z" fill="#d6f3dd" fill-opacity="0.57"/>
<path d="M1871.8,920.9 L1891.5,939.8 L1870.0,920.4 Z" fill="#bce0c5" fill-opacity="0.72"/>
<path d="M2643.0,1022.2 L2632.2,1033.7 L2629.8,1026.0 Z" fill="#c2e6cb" fill-opacity="0.67"/>
<path d="M1310.6,972.2 L1293.9,980.2 L1272.9,976.3 Z" fill="#bfe3c8" fill-opacity="0.53"/>
<path d="M2031.3,903.4 L2020.5,914.3 L1994.5,910.3 Z" fill="#c2e6cb" fill-opacity="0.61"/>
<path d="M1840.7,967.0 L1853.0,952.0 L1817.8,992.9 Z" fill="#bce0c5" fill-opacity="0.69"/>
<path d="M2804.3,958.7 L2777.1,959.6 L2813.3,959.9 Z" fill="#bce0c5" fill-opacity="0.68"/>
<path d="M1628.1,1134.4 L1589.5,1082.5 L1579.4,1104.5 Z" fill="#d6f3dd" fill-opacity="0.82"/>
<path d="M2088.9,951.4 L2087.1,964.6 L2075.6,965.9 Z" fill="#c2e6cb" fill-opacity="0.74"/>
<path d="M2374.7,981.9 L2373.5,924.2 L2371.2,967.9 Z" fill="#d6f3dd" fill-opacity="0.58"/>
<path d="M2378.6,922.1 L2377.6,914.8 L2371.1,898.6 Z" fill="#bfe3c8" fill-opacity="0.65"/>
<path d="M1517.1,1066.7 L1524.4,1076.4 L1531.9,1076.0 Z" fill="#bfe3c8" fill-opacity="0.80"/>
<path d="M2688.5,1152.6 L2673.3,1159.9 L2661.0,1184.4 Z" fill="#cfefd6" fill-opacity="0.87"/>
<path d="M1416.3,969.5 L1451.0,950.7 L1437.1,944.2 Z" fill="#cfefd6" fill-opacity="0.82"/>
<path d="M2902.0,992.0 L2899.1,973.2 L2908.9,991.8 Z" fill="#bfe3c8" fill-opacity="0.54"/>
<path d="M2985.3,976.8 L3006.1,981.2 L3010.6,971.0 Z" fill="#cfefd6" fill-opacity="0.86"/>
<path d="M1793.3,1162.0 L1778.2,1160.3 L1804.8,1178.3 Z" fill="#d2f1d9" fill-opacity="0.57"/>
<path d="M1653.8,1033.3 L1665.8,1029.2 L1659.4,1060.9 Z" fill="#d6f3dd" fill-opacity="0.62"/>
<path d="M2878.2,962.8 L2907.3,974.0 L2887.2,989.8 Z" fill="#bfe3c8" fill-opacity="0.79"/>
<path d="M2261.5,1121.7 L2245.8,1134.7 L2268.4,1120.8 Z" fill="#cfefd6" fill-opacity="0.83"/>
<path d="M1619.8,1188.2 L1580.7,1173.2 L1581.4,1194.5 Z" fill="#c2e6cb" fill-opacity="0.66"/>
<path d="M1746.6,1031.0 L1724.9,1028.5 L1732.8,1033.0 Z" fill="#d6f3dd" fill-opacity="0.55"/>
<path d="M1476.2,1075.7 L1487.9,1084.4 L1484.8,1070.0 Z" fill="#bfe3c8" fill-opacity="0.66"/>
<path d="M2676.0,1162.5 L2672.1,1195.2 L2638.5,1199.2 Z" fill="#d6f3dd" fill-opacity="0.67"/>
<path d="M1569.2,971.7 L1565.9,962.7 L1560.0,967.5 Z" fill="#c2e6cb" fill-opacity="0.55"/>
<path d="M1858.2,885.2 L1868.8,896.5 L1909.8,904.2 Z" fill="#bce0c5" fill-opacity="0.68"/>
<path d="M2091.9,1066.7 L2111.8,1050.7 L2093.8,1074.8 Z" fill="#d2f1d9" fill-opacity="0.76"/>
<path d="M2661.6,922.5 L2685.4,924.1 L2687.2,938.4 Z" fill="#c2e6cb" fill-opacity="0.79"/>
<path d="M2293.1,952.6 L2281.9,906.3 L2250.4,931.5 Z" fill="#d2f1d9" fill-opacity="0.62"/>
<path d="M2226.8,1056.3 L2243.3,1057.3 L2226.7,1055.8 Z" fill="#d6f3dd" fill-opacity="0.84"/>
<path d="M1916.3,1030.3 L1920.7,1026.8 L1938.1,1040.0 Z" fill="#bfe3c8" fill-opacity="0.52"/>
<path d="M2367.0,1106.3 L2351.6,1099.2 L2372.3,1096.9 Z" fill="#bce0c5" fill-opacity="0.88"/>
<path d="M2975.0,1021.4 L2982.2,1000.4 L2967.3,1026.8 Z" fill="#bfe3c8" fill-opacity="0.68"/>
<path d="M2915.8,1002.6 L2894.0,1012.5 L2906.3,1008.2 Z" fill="#cfefd6" fill-opacity="0.54"/>
<path d="M2824.6,1070.0 L2834.1,1068.8 L2852.3,1073.2 Z" fill="#d2f1d9" fill-opacity="0.74"/>
<path d="M2402.5,1058.8 L2413.5,1038.6 L2390.5,1059.7 Z" fill="#cfefd6" fill-opacity="0.89"/>
<path d="M2329.7,1177.9 L2281.5,1135.9 L2303.6,1143.5 Z" fill="#bce0c5" fill-opacity="0.88"/>
<path d="M1841.2,1045.5 L1837.8,1034.9 L1840.1,1025.2 Z" fill="#cfefd6" fill-opacity="0.67"/>
<path d="M2018.4,1093.9 L2032.9,1079.2 L2044.3,1088.3 Z" fill="#d6f3dd" fill-opacity="0.62"/>
<path d="M2632.2,1056.7 L2628.7,1040.3 L2639.5,1075.4 Z" fill="#d6f3dd" fill-opacity="0.88"/>
<path d="M1404.1,898.6 L1419.3,929.0 L1380.6,899.3 Z" fill="#bce0c5" fill-opacity="0.66"/>
<path d="M2256.4,961.9 L2227.7,942.6 L2227.4,946.1 Z" fill="#bce0c5" fill-opacity="0.88"/>
<path d="M2740.0,1111.7 L2742.7,1123.9 L2729.4,1124.0 Z" fill="#bfe3c8" fill-opacity="0.57"/>
<path d="M2723.6,1081.6 L2722.6,1085.3 L2723.2,1071.0 Z" fill="#d2f1d9" fill-opacity="0.63"/>
<path d="M1345.9,962.4 L1328.7,946.1 L1304.9,943.4 Z" fill="#bfe3c8" fill-opacity="0.87"/>
<path d="M2793.1,993.1 L2767.5,976.0 L2767.1,970.3 Z" fill="#c2e6cb" fill-opacity="0.77"/>
<path d="M2432.3,1149.7 L2423.1,1129.6 L2427.0,1159.2 Z" fill="#c2e6cb" fill-opacity="0.70"/>
<path d="M2743.5,1065.2 L2730.6,1049.2 L2729.6,1071.7 Z" fill="#bfe3c8" fill-opacity="0.53"/>
<path d="M1856.5,882.1 L1892.1,901.3 L1911.1,929.8 Z" fill="#bfe3c8" fill-opacity="0.53"/>
<path d="M1887.1,982.0 L1895.3,969.7 L1914.4,970.9 Z" fill="#bfe3c8" fill-opacity="0.85"/>
<path d="M2484.8,1065.2 L2499.8,1076.0 L2448.7,1044.6 Z" fill="#bce0c5" fill-opacity="0.76"/>
<path d="M2191.3,1115.8 L2195.1,1109.5 L2178.4,1108.8 Z" fill="#d2f1d9" fill-opacity="0.84"/>
<path d="M2768.9,1141.9 L2794.1,1128.9 L2749.8,1138.3 Z" fill="#d2f1d9" fill-opacity="0.69"/>
<path d="M1722.9,1114.9 L1734.8,1107.1 L1751.8,1103.8 Z" fill="#bce0c5" fill-opacity="0.52"/>
<path d="M1615.0,960.0 L1597.3,916.1 L1587.4,927.0 Z" fill="#d6f3dd" fill-opacity="0.58"/>
<path d="M1764.2,978.6 L1799.6,993.4 L1796.7,976.5 Z" fill="#c2e6cb" fill-opacity="0.58"/>
<path d="M2743.9,892.8 L2727.8,916.7 L2756.0,906.5 Z" fill="#cfefd6" fill-opacity="0.63"/>
<path d="M1527.7,1063.6 L1524.5,1060.9 L1520.3,1076.0 Z" fill="#c2e6cb" fill-opacity="0.74"/>
<path d="M1735.9,1037.1 L1712.4,1037.0 L1732.5,1021.4 Z" fill="#d6f3dd" fill-opacity="0.55"/>
<path d="M1813.1,1018.8 L1833.8,1039.5 L1798.6,1013.1 Z" fill="#bfe3c8" fill-opacity="0.79"/>
<path d="M2129.9,1186.0 L2121.2,1179.8 L2159.7,1176.0 Z" fill="#d6f3dd" fill-opacity="0.51"/>
<path d="M2386.6,947.1 L2383.0,958.6 L2385.4,958.6 Z" fill="#bfe3c8" fill-opacity="0.81"/>
<path d="M2853.3,1116.8 L2852.2,1109.2 L2834.8,1107.8 Z" fill="#c2e6cb" fill-opacity="0.62"/>
<path d="M2720.7,943.9 L2719.8,941.9 L2694.2,949.7 Z" fill="#bce0c5" fill-opacity="0.70"/>
<path d="M2577.5,948.5 L2559.0,934.3 L2561.6,932.9 Z" fill="#c2e6cb" fill-opacity="0.88"/>
<path d="M2332.0,914.8 L2340.2,930.0 L2328.6,931.7 Z" fill="#c2e6cb" fill-opacity="0.64"/>
<path d="M1870.1,1168.2 L1856.3,1176.2 L1853.5,1135.4 Z" fill="#d6f3dd" fill-opacity="0.81"/>
<path d="M2894.4,1000.4 L2895.6,998.7 L2898.3,1021.1 Z" fill="#bfe3c8" fill-opacity="0.84"/>
<path d="M2991.3,992.5 L3004.5,1001.1 L2985.0,1005.0 Z" fill="#bce0c5" fill-opacity="0.64"/>
<path d="M2999.2,1110.3 L2998.6,1131.9 L3004.5,1125.0 Z" fill="#bfe3c8" fill-opacity="0.70"/>
<path d="M1696.7,1062.8 L1705.3,1044.9 L1686.3,1042.9 Z" fill="#d2f1d9" fill-opacity="0.70"/>
<path d="M1467.9,1156.6 L1491.5,1185.1 L1453.0,1172.6 Z" fill="#d2f1d9" fill-opacity="0.85"/>
<path d="M2541.7,1199.9 L2551.9,1191.2 L2554.8,1188.0 Z" fill="#bfe3c8" fill-opacity="0.63"/>
<path d="M2101.3,1021.2 L2083.3,1017.6 L2092.1,1011.7 Z" fill="#d6f3dd" fill-opacity="0.78"/>
<path d="M2349.9,1073.3 L2336.2,1076.3 L2322.2,1100.5 Z" fill="#d6f3dd" fill-opacity="0.75"/>
<path d="M1799.1,1092.4 L1793.8,1087.9 L1806.2,1094.1 Z" fill="#c2e6cb" fill-opacity="0.80"/>
<path d="M1570.8,1019.2 L1571.1,999.3 L1635.7,1030.8 Z" fill="#bfe3c8" fill-opacity="0.66"/>
<path d="M1855.2,913.8 L1817.8,918.6 L1853.8,908.2 Z" fill="#d6f3dd" fill-opacity="0.82"/>
<path d="M2863.0,1093.8 L2852.6,1095.1 L2898.4,1112.4 Z" fill="#bce0c5" fill-opacity="0.61"/>
<path d="M1439.1,1017.8 L1444.3,1006.0 L1431.8,1016.5 Z" fill="#d2f1d9" fill-opacity="0.60"/>
<path d="M2415.5,1015.5 L2436.8,1014.7 L2464.7,985.0 Z" fill="#d2f1d9" fill-opacity="0.79"/>
<path d="M2559.8,911.0 L2536.8,907.8 L2546.7,908.2 Z" fill="#c2e6cb" fill-opacity="0.55"/>
<path d="M1897.0,963.2 L1906.1,966.4 L1879.5,961.8 Z" fill="#cfefd6" fill-opacity="0.76"/>
<path d="M2455.0,1007.1 L2459.1,997.7 L2456.6,988.2 Z" fill="#bfe3c8" fill-opacity="0.60"/>
<path d="M2776.1,1147.4 L2802.0,1146.3 L2767.4,1133.1 Z" fill="#cfefd6" fill-opacity="0.66"/>
<path d="M3021.3,952.1 L3014.1,945.7 L3011.6,941.1 Z" fill="#cfefd6" fill-opacity="0.61"/>
<path d="M1708.4,1103.4 L1722.4,1110.9 L1719.9,1107.6 Z" fill="#cfefd6" fill-opacity="0.84"/>
<path d="M2579.7,1013.8 L2543.1,1033.5 L2551.3,1039.0 Z" fill="#bce0c5" fill-opacity="0.52"/>
<path d="M2980.7,1088.3 L3022.3,1105.1 L3016.9,1085.2 Z" fill="#cfefd6" fill-opacity="0.66"/>
<path d="M2935.6,1070.7 L2958.4,1071.3 L2956.3,1081.7 Z" fill="#cfefd6" fill-opacity="0.75"/>
<path d="M1320.0,1008.3 L1333.6,1019.9 L1312.9,998.4 Z" fill="#d2f1d9" fill-opacity="0.71"/>
<path d="M1238.6,1184.8 L1280.9,1163.4 L1227.6,1168.5 Z" fill="#cfefd6" fill-opacity="0.72"/>
<path d="M1447.8,1082.8 L1441.5,1108.5 L1446.1,1090.2 Z" fill="#d6f3dd" fill-opacity="0.72"/>
<path d="M1373.9,970.2 L1413.1,977.8 L1416.7,955.2 Z" fill="#bce0c5" fill-opacity="0.69"/>
<path d="M1664.6,965.5 L1644.4,950.6 L1642.4,970.9 Z" fill="#d2f1d9" fill-opacity="0.76"/>
<path d="M3001.6,1118.6 L2989.5,1112.5 L2975.0,1113.5 Z" fill="#d2f1d9" fill-opacity="0.67"/>
<path d="M2862.0,1151.3 L2845.0,1130.6 L2834.7,1138.2 Z" fill="#bce0c5" fill-opacity="0.70"/>
<path d="M1366.4,986.1 L1380.7,966.3 L1353.7,986.8 Z" fill="#d6f3dd" fill-opacity="0.70"/>
<path d="M1771.3,1167.7 L1783.1,1193.0 L1775.1,1168.1 Z" fill="#bfe3c8" fill-opacity="0.86"/>
<path d="M2172.8,1047.6 L2202.0,1028.4 L2202.9,1037.0 Z" fill="#cfefd6" fill-opacity="0.79"/>
<path d="M2491.4,1043.8 L2477.8,1012.7 L2490.3,1045.1 Z" fill="#cfefd6" fill-opacity="0.77"/>
<path d="M2914.0,1056.6 L2899.9,1036.6 L2917.0,1048.7 Z" fill="#c2e6cb" fill-opacity="0.76"/>
<path d="M2561.1,1082.1 L2550.8,1080.7 L2548.5,1068.6 Z" fill="#bfe3c8" fill-opacity="0.82"/>
<path d="M2147.9,1195.4 L2207.5,1188.5 L2183.4,1201.5 Z" fill="#c2e6cb" fill-opacity="0.64"/>
<path d="M2134.1,1149.9 L2146.8,1158.4 L2140.3,1160.1 Z" fill="#bce0c5" fill-opacity="0.65"/>
<path d="M2198.1,1054.4 L2215.1,1028.8 L2246.9,1055.6 Z" fill="#c2e6cb" fill-opacity="0.88"/>
<path d="M1367.7,964.3 L1376.8,987.9 L1406.6,984.8 Z" fill="#c2e6cb" fill-opacity="0.52"/>
<path d="M1253.5,966.2 L1305.2,962.9 L1263.6,993.3 Z" fill="#c2e6cb" fill-opacity="0.58"/>
<path d="M1333.9,1140.8 L1337.4,1136.4 L1336.8,1148.9 Z" fill="#bfe3c8" fill-opacity="0.85"/>
<path d="M1437.8,1098.5 L1447.8,1079.8 L1454.6,1087.2 Z" fill="#cfefd6" fill-opacity="0.55"/>
<path d="M1477.9,1061.3 L1476.2,1050.6 L1466.0,1046.2 Z" fill="#bfe3c8" fill-opacity="0.76"/>
<path d="M2737.3,992.7 L2743.3,998.3 L2718.8,985.4 Z" fill="#bfe3c8" fill-opacity="0.79"/>
<path d="M1624.1,1151.0 L1623.8,1158.9 L1614.9,1156.4 Z" fill="#cfefd6" fill-opacity="0.56"/>
<path d="M2166.1,937.2 L2176.6,959.1 L2175.9,967.3 Z" fill="#d2f1d9" fill-opacity="0.87"/>
<path d="M1418.7,1025.8 L1405.6,1040.9 L1456.6,1042.2 Z" fill="#cfefd6" fill-opacity="0.76"/>
<path d="M2098.5,973.4 L2098.7,973.0 L2109.7,984.9 Z" fill="#d6f3dd" fill-opacity="0.62"/>
<path d="M2680.9,1123.2 L2616.6,1133.5 L2645.2,1082.6 Z" fill="#d6f3dd" fill-opacity="0.87"/>
<path d="M1915.0,1054.5 L1895.3,1050.2 L1884.1,1011.6 Z" fill="#c2e6cb" fill-opacity="0.51"/>
<path d="M1592.4,936.6 L1583.9,962.0 L1579.1,965.0 Z" fill="#cfefd6" fill-opacity="0.64"/>
<path d="M1452.4,1151.8 L1404.1,1147.7 L1452.4,1170.6 Z" fill="#d2f1d9" fill-opacity="0.70"/>
<path d="M2292.2,1036.3 L2312.6,1018.9 L2310.0,1013.6 Z" fill="#d2f1d9" fill-opacity="0.55"/>
<path d="M2589.5,1064.7 L2570.3,1068.4 L2557.0,1087.1 Z" fill="#d6f3dd" fill-opacity="0.54"/>
<path d="M1737.0,910.4 L1742.0,926.7 L1734.1,902.9 Z" fill="#d2f1d9" fill-opacity="0.61"/>
<path d="M2794.0,1194.0 L2829.0,1154.7 L2804.2,1202.2 Z" fill="#d2f1d9" fill-opacity="0.78"/>
<path d="M2085.7,1030.6 L2073.2,1030.0 L2072.8,1037.8 Z" fill="#c2e6cb" fill-opacity="0.53"/>
<path d="M1899.6,1144.6 L1887.4,1141.5 L1890.9,1131.8 Z" fill="#d6f3dd" fill-opacity="0.70"/>
<path d="M2804.3,979.4 L2783.3,1003.5 L2787.8,1013.0 Z" fill="#d2f1d9" fill-opacity="0.70"/>
<path d="M1832.6,911.2 L1805.8,913.6 L1834.8,929.6 Z" fill="#c2e6cb" fill-opacity="0.56"/>
<path d="M2981.5,1159.3 L2990.4,1157.3 L2968.8,1163.8 Z" fill="#cfefd6" fill-opacity="0.87"/>
<path d="M2795.4,1002.3 L2823.7,986.5 L2811.5,974.4 Z" fill="#bce0c5" fill-opacity="0.74"/>
<path d="M2381.9,932.6 L2384.2,957.0 L2381.2,943.7 Z" fill="#d6f3dd" fill-opacity="0.59"/>
<path d="M2867.0,1146.8 L2842.7,1147.6 L2862.3,1154.6 Z" fill="#bfe3c8" fill-opacity="0.62"/>
<path d="M2652.4,1154.4 L2650.6,1149.8 L2702.0,1162.6 Z" fill="#d6f3dd" fill-opacity="0.51"/>
<path d="M1805.0,1051.1 L1862.6,1077.6 L1798.9,1081.7 Z" fill="#c2e6cb" fill-opacity="0.60"/>
<path d="M2548.7,1031.3 L2528.4,1023.8 L2531.1,1025.6 Z" fill="#c2e6cb" fill-opacity="0.65"/>
<path d="M2442.3,919.6 L2419.6,943.1 L2466.4,919.8 Z" fill="#c2e6cb" fill-opacity="0.62"/>
<path d="M2629.6,1131.9 L2673.5,1109.0 L2644.0,1147.4 Z" fill="#bfe3c8" fill-opacity="0.54"/>
<path d="M2720.2,991.5 L2704.5,983.9 L2663.1,998.2 Z" fill="#bce0c5" fill-opacity="0.72"/>
<path d="M1682.3,943.3 L1683.3,934.7 L1682.1,929.0 Z" fill="#d6f3dd" fill-opacity="0.65"/>
<path d="M1784.2,1003.4 L1780.5,1007.4 L1800.4,1008.4 Z" fill="#cfefd6" fill-opacity="0.79"/>
<path d="M1526.6,911.6 L1484.1,937.0 L1496.1,946.0 Z" fill="#cfefd6" fill-opacity="0.56"/>
<path d="M1411.0,951.2 L1386.4,951.9 L1382.3,979.1 Z" fill="#bfe3c8" fill-opacity="0.60"/>
<path d="M2658.0,1177.9 L2634.6,1146.9 L2607.2,1173.1 Z" fill="#bce0c5" fill-opacity="0.88"/>
<path d="M2598.2,901.1 L2607.0,928.7 L2613.0,930.9 Z" fill="#c2e6cb" fill-opacity="0.76"/>
<path d="M1269.8,1178.2 L1273.3,1194.2 L1280.3,1195.7 Z" fill="#bfe3c8" fill-opacity="0.65"/>
<path d="M1410.3,923.9 L1426.0,932.2 L1426.7,917.1 Z" fill="#bce0c5" fill-opacity="0.80"/>
<path d="M1511.6,982.0 L1527.7,996.3 L1491.4,997.4 Z" fill="#c2e6cb" fill-opacity="0.66"/>
<path d="M2954.7,969.7 L2922.8,968.1 L2896.6,978.6 Z" fill="#d6f3dd" fill-opacity="0.50"/>
<path d="M2868.3,1053.9 L2867.8,1066.0 L2856.5,1052.8 Z" fill="#bce0c5" fill-opacity="0.71"/>
<path d="M2451.2,1109.1 L2475.7,1121.3 L2473.1,1105.9 Z" fill="#bce0c5" fill-opacity="0.74"/>
<path d="M2499.9,1043.3 L2510.4,1073.3 L2484.2,1038.8 Z" fill="#bce0c5" fill-opacity="0.55"/>
<path d="M2682.9,1131.7 L2710.8,1145.1 L2691.7,1140.8 Z" fill="#cfefd6" fill-opacity="0.52"/>
<path d="M1940.1,1052.8 L1953.4,1055.4 L1931.7,1046.2 Z" fill="#c2e6cb" fill-opacity="0.74"/>
<path d="M1567.4,1069.6 L1551.4,1079.2 L1567.1,1065.1 Z" fill="#bfe3c8" fill-opacity="0.74"/>
<path d="M2417.3,994.2 L2423.0,998.9 L2443.3,985.8 Z" fill="#d6f3dd" fill-opacity="0.59"/>
<path d="M2482.2,973.4 L2524.7,979.8 L2529.7,1005.3 Z" fill="#bfe3c8" fill-opacity="0.79"/>
<path d="M2206.1,1060.9 L2184.3,1076.9 L2211.1,1075.5 Z" fill="#c2e6cb" fill-opacity="0.72"/>
<path d="M1308.9,946.4 L1296.1,934.7 L1294.2,927.5 Z" fill="#bce0c5" fill-opacity="0.74"/>
<path d="M1570.1,1100.5 L1590.9,1106.1 L1598.6,1085.2 Z" fill="#bfe3c8" fill-opacity="0.52"/>
<path d="M1307.5,914.7 L1309.1,919.0 L1295.6,904.1 Z" fill="#d6f3dd" fill-opacity="0.70"/>
<path d="M2912.3,992.6 L2896.3,974.5 L2887.2,981.3 Z" fill="#cfefd6" fill-opacity="0.70"/>
<path d="M2439.0,1082.1 L2503.3,1075.1 L2438.5,1074.0 Z" fill="#d2f1d9" fill-opacity="0.57"/>
<path d="M1650.9,996.5 L1653.5,981.0 L1669.1,985.9 Z" fill="#c2e6cb" fill-opacity="0.56"/>
<path d="M2420.0,909.9 L2398.0,930.0 L2419.1,932.2 Z" fill="#c2e6cb" fill-opacity="0.71"/>
<path d="M1965.9,954.5 L1998.1,930.4 L1962.1,951.7 Z" fill="#d2f1d9" fill-opacity="0.65"/>
<path d="M1708.4,1072.0 L1677.2,1088.2 L1665.6,1061.5 Z" fill="#c2e6cb" fill-opacity="0.67"/>
<path d="M1890.0,929.7 L1865.8,901.0 L1908.7,919.1 Z" fill="#cfefd6" fill-opacity="0.58"/>
<path d="M1494.5,1095.7 L1449.4,1082.6 L1473.5,1099.8 Z" fill="#d6f3dd" fill-opacity="0.87"/>
<path d="M2410.6,1084.3 L2419.7,1081.4 L2402.0,1083.1 Z" fill="#bce0c5" fill-opacity="0.57"/>
<path d="M1570.1,940.4 L1529.9,952.7 L1562.1,968.4 Z" fill="#d2f1d9" fill-opacity="0.58"/>
<path d="M1689.2,947.2 L1694.2,952.9 L1697.7,950.6 Z" fill="#d2f1d9" fill-opacity="0.64"/>
<path d="M1818.1,1163.3 L1805.3,1133.4 L1826.9,1162.1 Z" fill="#bfe3c8" fill-opacity="0.62"/>
<path d="M2039.6,1048.7 L2030.8,1043.5 L2023.6,1057.8 Z" fill="#d6f3dd" fill-opacity="0.52"/>
<path d="M2989.8,972.2 L2987.3,948.1 L3020.4,984.5 Z" fill="#c2e6cb" fill-opacity="0.53"/>
<path d="M2945.0,939.5 L2936.0,945.5 L2953.0,946.3 Z" fill="#c2e6cb" fill-opacity="0.89"/>
<path d="M2569.4,1110.2 L2597.4,1099.0 L2572.0,1071.5 Z" fill="#d6f3dd" fill-opacity="0.75"/>
<path d="M1651.5,951.1 L1622.4,958.5 L1637.5,960.1 Z" fill="#cfefd6" fill-opacity="0.53"/>
<path d="M2859.0,900.8 L2874.2,899.6 L2857.6,903.6 Z" fill="#bce0c5" fill-opacity="0.58"/>
<path d="M1276.6,1030.5 L1250.5,1042.7 L1281.3,1033.9 Z" fill="#c2e6cb" fill-opacity="0.73"/>
<path d="M1842.8,935.5 L1833.5,894.1 L1854.4,940.3 Z" fill="#bce0c5" fill-opacity="0.68"/>
<path d="M2676.5,932.7 L2706.6,920.8 L2703.0,931.8 Z" fill="#c2e6cb" fill-opacity="0.89"/>
<path d="M2520.1,1128.1 L2460.9,1134.6 L2476.0,1131.5 Z" fill="#c2e6cb" fill-opacity="0.82"/>
<path d="M2736.9,948.8 L2724.4,927.8 L2719.4,963.9 Z" fill="#d2f1d9" fill-opacity="0.60"/>
<path d="M2481.0,1078.8 L2465.0,1081.3 L2475.8,1111.2 Z" fill="#cfefd6" fill-opacity="0.84"/>
<path d="M1594.1,1069.9 L1604.1,1109.4 L1560.1,1061.9 Z" fill="#d6f3dd" fill-opacity="0.79"/>
<path d="M2278.4,1156.4 L2286.7,1180.2 L2317.1,1171.0 Z" fill="#bfe3c8" fill-opacity="0.57"/>
<path d="M2794.5,1020.3 L2806.4,1022.0 L2779.0,1025.3 Z" fill="#bce0c5" fill-opacity="0.80"/>
<path d="M2162.2,1030.9 L2167.1,1066.3 L2146.0,1017.4 Z" fill="#c2e6cb" fill-opacity="0.73"/>
<path d="M1365.0,1168.5 L1387.4,1177.4 L1330.6,1158.8 Z" fill="#cfefd6" fill-opacity="0.54"/>
<path d="M1396.4,991.2 L1363.9,1009.2 L1390.8,1017.3 Z" fill="#bce0c5" fill-opacity="0.52"/>
<path d="M1781.1,927.0 L1826.4,909.8 L1815.0,907.3 Z" fill="#d2f1d9" fill-opacity="0.50"/>
<path d="M1875.3,1103.0 L1939.6,1137.0 L1898.7,1145.8 Z" fill="#bce0c5" fill-opacity="0.52"/>
<path d="M1560.5,970.2 L1565.6,943.5 L1588.5,966.9 Z" fill="#bfe3c8" fill-opacity="0.83"/>
<path d="M2923.3,977.7 L2929.3,1007.0 L2903.3,1010.6 Z" fill="#bce0c5" fill-opacity="0.77"/>
<path d="M2986.6,1147.0 L2995.8,1148.0 L2975.5,1132.6 Z" fill="#bfe3c8" fill-opacity="0.83"/>
<path d="M2930.2,931.5 L2968.2,943.3 L2961.6,941.8 Z" fill="#cfefd6" fill-opacity="0.72"/>
<path d="M1671.6,1136.6 L1708.6,1143.0 L1704.3,1134.5 Z" fill="#c2e6cb" fill-opacity="0.55"/>
<path d="M1333.2,972.1 L1339.0,998.9 L1308.0,996.6 Z" fill="#d2f1d9" fill-opacity="0.87"/>
<path d="M1953.6,1076.4 L1956.8,1067.2 L1946.5,1087.8 Z" fill="#c2e6cb" fill-opacity="0.59"/>
<path d="M2227.2,911.4 L2217.7,920.9 L2240.2,917.7 Z" fill="#d2f1d9" fill-opacity="0.68"/>
<path d="M1309.5,939.6 L1300.2,927.6 L1291.3,931.0 Z" fill="#d6f3dd" fill-opacity="0.55"/>
<path d="M1344.3,967.9 L1360.7,956.6 L1335.8,985.6 Z" fill="#c2e6cb" fill-opacity="0.77"/>
<path d="M2171.5,1027.1 L2204.1,1052.6 L2180.5,1046.1 Z" fill="#bfe3c8" fill-opacity="0.76"/>
<path d="M2737.4,1111.7 L2678.8,1127.1 L2694.6,1117.9 Z" fill="#bfe3c8" fill-opacity="0.84"/>
<path d="M2567.1,1107.2 L2569.8,1096.5 L2565.6,1102.8 Z" fill="#d6f3dd" fill-opacity="0.68"/>
<path d="M2156.9,1060.1 L2193.6,1078.8 L2161.0,1078.7 Z" fill="#d6f3dd" fill-opacity="0.78"/>
<path d="M2302.9,929.4 L2302.5,932.2 L2314.8,928.6 Z" fill="#d6f3dd" fill-opacity="0.88"/>
<path d="M1442.1,1001.1 L1449.5,1017.8 L1400.4,1010.2 Z" fill="#c2e6cb" fill-opacity="0.64"/>
<path d="M2403.7,949.5 L2382.8,947.1 L2385.0,963.2 Z" fill="#cfefd6" fill-opacity="0.83"/>
<path d="M1835.7,1088.9 L1835.3,1081.2 L1845.5,1083.5 Z" fill="#bce0c5" fill-opacity="0.85"/>
<path d="M2444.1,1103.9 L2442.4,1093.2 L2458.2,1097.0 Z" fill="#d2f1d9" fill-opacity="0.89"/>
<path d="M1916.6,1194.0 L1888.9,1178.4 L1891.3,1183.9 Z" fill="#bfe3c8" fill-opacity="0.72"/>
<path d="M1415.1,1116.5 L1404.9,1113.2 L1418.6,1119.7 Z" fill="#bce0c5" fill-opacity="0.57"/>
<path d="M1630.9,1020.8 L1638.0,1002.5 L1590.5,1014.6 Z" fill="#bfe3c8" fill-opacity="0.60"/>
<path d="M2172.0,985.6 L2179.5,971.3 L2159.5,979.5 Z" fill="#bfe3c8" fill-opacity="0.63"/>
<path d="M2511.0,1153.1 L2523.9,1164.3 L2467.4,1132.4 Z" fill="#cfefd6" fill-opacity="0.72"/>
<path d="M2066.3,1088.2 L2074.4,1097.9 L2063.2,1089.0 Z" fill="#d6f3dd" fill-opacity="0.74"/>
<path d="M1916.8,1096.7 L1937.2,1093.6 L1895.1,1053.6 Z" fill="#c2e6cb" fill-opacity="0.64"/>
<path d="M2762.0,1184.6 L2768.1,1183.9 L2744.2,1190.3 Z" fill="#cfefd6" fill-opacity="0.73"/>
<path d="M1713.5,1123.4 L1713.5,1139.4 L1699.9,1140.0 Z" fill="#bfe3c8" fill-opacity="0.62"/>
<path d="M1429.6,1175.1 L1448.1,1188.8 L1409.4,1208.6 Z" fill="#d2f1d9" fill-opacity="0.79"/>
<path d="M1790.0,1115.9 L1792.2,1130.6 L1776.1,1125.9 Z" fill="#c2e6cb" fill-opacity="0.76"/>
<path d="M2429.3,1176.0 L2421.1,1186.9 L2436.8,1198.6 Z" fill="#d2f1d9" fill-opacity="0.79"/>
<path d="M2941.1,979.1 L2940.1,965.8 L2961.4,987.5 Z" fill="#d6f3dd" fill-opacity="0.62"/>
<path d="M2732.4,939.7 L2763.1,931.7 L2765.0,940.9 Z" fill="#bce0c5" fill-opacity="0.57"/>
<path d="M2373.1,964.5 L2383.2,976.4 L2335.9,950.5 Z" fill="#d2f1d9" fill-opacity="0.80"/>
<path d="M2353.6,1073.7 L2367.3,1059.2 L2341.1,1035.2 Z" fill="#bfe3c8" fill-opacity="0.56"/>
<path d="M2696.9,1056.7 L2720.0,1038.5 L2707.9,1039.1 Z" fill="#d6f3dd" fill-opacity="0.66"/>
<path d="M2138.6,1114.5 L2145.2,1096.6 L2131.1,1093.3 Z" fill="#bfe3c8" fill-opacity="0.65"/>
<path d="M2564.4,1180.1 L2558.6,1172.6 L2543.7,1188.4 Z" fill="#cfefd6" fill-opacity="0.73"/>
<path d="M2782.1,1168.8 L2792.4,1164.1 L2772.4,1158.5 Z" fill="#d2f1d9" fill-opacity="0.75"/>
<path d="M2097.4,927.5 L2114.4,918.4 L2094.1,918.8 Z" fill="#d2f1d9" fill-opacity="0.89"/>
<path d="M1793.7,995.8 L1807.2,982.9 L1816.9,994.5 Z" fill="#c2e6cb" fill-opacity="0.71"/>
<path d="M2092.5,1056.3 L2101.2,1069.6 L2090.1,1071.8 Z" fill="#d6f3dd" fill-opacity="0.66"/>
<path d="M1851.0,990.7 L1865.4,1018.5 L1842.7,1017.3 Z" fill="#bfe3c8" fill-opacity="0.53"/>
<path d="M1827.0,1063.1 L1807.8,1066.6 L1804.7,1055.2 Z" fill="#cfefd6" fill-opacity="0.63"/>
<path d="M1300.3,948.2 L1363.8,963.0 L1301.4,977.6 Z" fill="#d2f1d9" fill-opacity="0.62"/>
<path d="M2618.7,1076.1 L2602.6,1091.8 L2618.0,1078.9 Z" fill="#c2e6cb" fill-opacity="0.78"/>
<path d="M2673.7,1082.6 L2678.6,1097.1 L2675.4,1078.8 Z" fill="#cfefd6" fill-opacity="0.87"/>
<path d="M3004.2,980.4 L3004.8,984.9 L3003.2,982.8 Z" fill="#bfe3c8" fill-opacity="0.85"/>
<path d="M2256.5,1026.0 L2272.7,1013.2 L2289.5,1018.0 Z" fill="#cfefd6" fill-opacity="0.73"/>
<path d="M1536.9,1132.1 L1536.3,1127.2 L1527.7,1129.8 Z" fill="#d6f3dd" fill-opacity="0.70"/>
<path d="M2091.6,1189.8 L2121.3,1170.0 L2093.8,1177.7 Z" fill="#d6f3dd" fill-opacity="0.61"/>
<path d="M2757.2,1184.0 L2755.7,1174.5 L2737.9,1187.7 Z" fill="#d2f1d9" fill-opacity="0.57"/>
<path d="M1482.5,1107.5 L1487.0,1108.3 L1481.2,1119.5 Z" fill="#c2e6cb" fill-opacity="0.89"/>
<path d="M2080.1,932.9 L2060.3,924.9 L2090.7,903.7 Z" fill="#bfe3c8" fill-opacity="0.89"/>
<path d="M1475.4,1052.8 L1457.7,1052.2 L1448.1,1062.3 Z" fill="#d6f3dd" fill-opacity="0.81"/>
<path d="M2862.0,1143.4 L2857.0,1137.5 L2856.4,1114.6 Z" fill="#bfe3c8" fill-opacity="0.53"/>
<path d="M2153.8,939.8 L2174.8,985.1 L2138.1,996.5 Z" fill="#cfefd6" fill-opacity="0.54"/>
<path d="M2676.4,934.8 L2678.2,941.2 L2688.7,939.4 Z" fill="#bce0c5" fill-opacity="0.64"/>
<path d="M2005.6,1006.3 L2021.9,1026.1 L2013.8,996.6 Z" fill="#c2e6cb" fill-opacity="0.55"/>
<path d="M2423.0,1159.9 L2430.5,1155.6 L2441.2,1161.4 Z" fill="#cfefd6" fill-opacity="0.85"/>
<path d="M1468.9,1203.2 L1520.9,1154.9 L1501.6,1151.0 Z" fill="#bfe3c8" fill-opacity="0.89"/>
<path d="M2639.0,1185.4 L2635.8,1137.3 L2594.5,1158.5 Z" fill="#bfe3c8" fill-opacity="0.56"/>
<path d="M2230.2,931.3 L2226.1,947.0 L2244.5,942.0 Z" fill="#bce0c5" fill-opacity="0.81"/>
<path d="M2470.9,1043.1 L2467.3,1038.1 L2472.9,1046.6 Z" fill="#d2f1d9" fill-opacity="0.70"/>
<path d="M2050.8,1019.5 L2071.0,1010.2 L2043.5,1017.3 Z" fill="#bce0c5" fill-opacity="0.65"/>
<path d="M1307.9,1160.1 L1297.1,1173.5 L1311.3,1166.8 Z" fill="#d6f3dd" fill-opacity="0.76"/>
<path d="M2676.7,1065.6 L2689.0,1097.1 L2689.6,1060.7 Z" fill="#cfefd6" fill-opacity="0.71"/>
<path d="M2470.2,941.7 L2457.5,962.8 L2457.0,967.9 Z" fill="#bce0c5" fill-opacity="0.56"/>
<path d="M2783.9,1173.0 L2803.2,1165.3 L2778.4,1178.0 Z" fill="#bfe3c8" fill-opacity="0.72"/>
<path d="M2517.5,1070.1 L2488.7,1087.4 L2479.1,1062.5 Z" fill="#cfefd6" fill-opacity="0.63"/>
<path d="M1275.7,1082.9 L1281.6,1067.6 L1275.2,1094.4 Z" fill="#d2f1d9" fill-opacity="0.62"/>
<path d="M2200.7,1059.5 L2207.8,1055.2 L2180.1,1055.0 Z" fill="#bce0c5" fill-opacity="0.76"/>
<path d="M2760.6,1070.6 L2760.2,1073.0 L2784.2,1080.6 Z" fill="#d2f1d9" fill-opacity="0.65"/>
<path d="M2866.9,1019.0 L2890.2,1043.1 L2881.0,1025.5 Z" fill="#cfefd6" fill-opacity="0.79"/>
<path d="M1457.4,1071.6 L1466.5,1077.5 L1460.4,1050.5 Z" fill="#c2e6cb" fill-opacity="0.67"/>
<path d="M1946.2,947.3 L1963.4,930.3 L1944.6,933.3 Z" fill="#d6f3dd" fill-opacity="0.64"/>
<path d="M2927.2,1059.9 L2920.2,1085.1 L2915.8,1072.7 Z" fill="#d2f1d9" fill-opacity="0.77"/>
<path d="M2271.2,1178.1 L2282.3,1184.5 L2279.5,1178.3 Z" fill="#bce0c5" fill-opacity="0.78"/>
<path d="M2639.7,1033.3 L2634.2,1031.0 L2634.8,1055.6 Z" fill="#d2f1d9" fill-opacity="0.70"/>
<path d="M2998.7,1156.9 L2984.3,1163.7 L3004.5,1171.9 Z" fill="#d2f1d9" fill-opacity="0.74"/>
<path d="M2039.1,1154.5 L2043.8,1155.7 L2046.0,1154.6 Z" fill="#d6f3dd" fill-opacity="0.85"/>
<path d="M2858.9,1172.4 L2879.9,1179.9 L2873.4,1173.4 Z" fill="#bce0c5" fill-opacity="0.72"/>
<path d="M2158.0,1097.2 L2141.7,1078.5 L2169.4,1086.9 Z" fill="#d6f3dd" fill-opacity="0.83"/>
<path d="M2375.3,1161.1 L2361.7,1160.3 L2386.6,1159.1 Z" fill="#d6f3dd" fill-opacity="0.77"/>
<path d="M1936.5,937.7 L1922.9,928.0 L1928.1,931.5 Z" fill="#c2e6cb" fill-opacity="0.75"/>
<path d="M2000.6,1049.6 L1996.2,1053.3 L2015.0,1058.0 Z" fill="#d6f3dd" fill-opacity="0.74"/>
<path d="M1326.5,963.3 L1332.5,951.7 L1350.6,971.4 Z" fill="#cfefd6" fill-opacity="0.55"/>
<path d="M1665.6,1060.3 L1661.4,1057.8 L1679.8,1061.4 Z" fill="#d2f1d9" fill-opacity="0.70"/>
<path d="M1665.9,909.5 L1659.8,907.9 L1641.8,933.7 Z" fill="#bce0c5" fill-opacity="0.80"/>
<path d="M2015.8,1038.1 L2025.5,1034.8 L1993.3,1054.7 Z" fill="#c2e6cb" fill-opacity="0.79"/>
<path d="M2988.4,964.3 L2968.6,951.6 L2980.8,960.9 Z" fill="#d6f3dd" fill-opacity="0.75"/>
<path d="M1462.5,973.8 L1498.3,962.0 L1500.7,960.6 Z" fill="#cfefd6" fill-opacity="0.87"/>
<path d="M2000.8,1019.6 L2017.4,1013.0 L2007.7,999.6 Z" fill="#c2e6cb" fill-opacity="0.50"/>
<path d="M1777.5,1122.7 L1771.5,1127.9 L1775.0,1130.6 Z" fill="#bfe3c8" fill-opacity="0.64"/>
<path d="M1639.5,1158.8 L1626.6,1160.2 L1634.4,1166.4 Z" fill="#bfe3c8" fill-opacity="0.83"/>
<path d="M2991.6,940.4 L3009.2,937.5 L3022.0,943.4 Z" fill="#c2e6cb" fill-opacity="0.64"/>
<path d="M2426.5,920.5 L2411.2,924.2 L2408.6,930.0 Z" fill="#d6f3dd" fill-opacity="0.58"/>
<path d="M2439.1,1079.7 L2433.8,1069.1 L2406.1,1080.6 Z" fill="#c2e6cb" fill-opacity="0.87"/>
<path d="M2963.3,951.1 L2961.5,933.9 L2947.2,953.1 Z" fill="#d6f3dd" fill-opacity="0.66"/>
<path d="M2121.3,1002.9 L2108.4,1022.0 L2149.3,1046.3 Z" fill="#cfefd6" fill-opacity="0.84"/>
<path d="M1274.8,1030.0 L1278.3,1023.5 L1284.8,1013.7 Z" fill="#bce0c5" fill-opacity="0.87"/>
<path d="M2352.4,1138.3 L2376.0,1122.8 L2379.6,1144.4 Z" fill="#bfe3c8" fill-opacity="0.80"/>
<path d="M1572.4,1151.1 L1627.2,1161.6 L1606.5,1160.6 Z" fill="#c2e6cb" fill-opacity="0.82"/>
<path d="M2360.2,1103.0 L2365.0,1102.9 L2360.5,1100.8 Z" fill="#c2e6cb" fill-opacity="0.63"/>
<path d="M1859.8,1094.5 L1827.6,1075.2 L1847.2,1091.5 Z" fill="#bce0c5" fill-opacity="0.58"/>
<path d="M1341.4,1065.5 L1338.3,1052.4 L1340.5,1066.5 Z" fill="#d6f3dd" fill-opacity="0.65"/>
<path d="M2576.0,1118.8 L2581.5,1115.4 L2617.2,1114.3 Z" fill="#d6f3dd" fill-opacity="0.76"/>
<path d="M2376.4,971.9 L2358.7,981.1 L2357.3,961.5 Z" fill="#bfe3c8" fill-opacity="0.62"/>
<path d="M1782.2,979.1 L1809.7,1001.0 L1775.3,984.8 Z" fill="#bce0c5" fill-opacity="0.87"/>
<path d="M1347.5,1089.0 L1377.3,1096.8 L1397.5,1091.6 Z" fill="#c2e6cb" fill-opacity="0.83"/>
<path d="M2668.3,1099.0 L2685.2,1084.4 L2678.6,1090.1 Z" fill="#cfefd6" fill-opacity="0.64"/>
<path d="M2847.2,1114.7 L2880.7,1125.7 L2854.5,1081.7 Z" fill="#c2e6cb" fill-opacity="0.52"/>
<path d="M2306.3,1170.1 L2300.7,1169.5 L2292.3,1168.5 Z" fill="#bce0c5" fill-opacity="0.76"/>
<path d="M1259.0,910.8 L1260.0,901.9 L1269.0,911.6 Z" fill="#bfe3c8" fill-opacity="0.73"/>
<path d="M2411.2,1101.2 L2415.7,1094.8 L2415.9,1095.7 Z" fill="#d6f3dd" fill-opacity="0.64"/>
<path d="M1469.0,921.0 L1449.2,932.3 L1448.2,929.2 Z" fill="#bce0c5" fill-opacity="0.58"/>
<path d="M3001.9,1019.6 L2974.1,999.8 L2964.8,1018.5 Z" fill="#d6f3dd" fill-opacity="0.84"/>
<path d="M2867.0,1033.0 L2853.9,1037.0 L2858.4,1066.1 Z" fill="#bfe3c8" fill-opacity="0.79"/>
<path d="M1485.6,1062.3 L1429.9,1055.0 L1462.2,1079.7 Z" fill="#c2e6cb" fill-opacity="0.72"/>
<path d="M1332.3,960.5 L1301.2,980.7 L1330.6,966.3 Z" fill="#d2f1d9" fill-opacity="0.74"/>
<path d="M2439.1,908.7 L2448.4,900.9 L2439.0,944.1 Z" fill="#bfe3c8" fill-opacity="0.59"/>
<path d="M1695.0,999.3 L1683.8,1003.8 L1698.8,982.2 Z" fill="#d6f3dd" fill-opacity="0.63"/>
<path d="M2521.0,1163.6 L2528.0,1122.7 L2511.7,1124.8 Z" fill="#d2f1d9" fill-opacity="0.57"/>
<path d="M1352.0,1144.6 L1339.9,1112.6 L1358.3,1104.0 Z" fill="#c2e6cb" fill-opacity="0.52"/></g>
<path d="M2492.0,1188.0 L2709.0,1044.0 L3010.0,1044.0 L3010.0,1188.0 Z" fill="#d6f3de"/>
<path d="M1780.0,1098.0 L1898.0,1098.0 L1898.0,1188.0 L1780.0,1188.0 Z" fill="#f5f5f5"/>
<path d="M1983.0,911.0 L2031.0,911.0 L2010.0,922.0 L1990.0,927.0 Z" fill="#eee5d5"/>
<path d="M2128.0,911.0 L2300.0,911.0 L2300.0,941.0 L2230.0,938.0 L2160.0,932.0 Z" fill="#eee5d5"/>
<path d="M2250.0,911.0 L2320.0,911.0 L2318.0,930.0 L2280.0,941.0 L2250.0,941.0 Z" fill="#eee5d5"/>
<path d="M0.0,1003.0 L70.0,1005.0 L78.0,1016.0 L0.0,1014.0 Z" fill="#eee5d5"/>
<path d="M798.0,1097.0 L860.0,1100.0 L873.0,1120.0 L860.0,1136.0 L800.0,1130.0 Z" fill="#eee5d5"/>
<path d="M680.0,1090.0 L728.0,1124.8 L700.0,1115.0 Z" fill="#eee5d5"/>
<path d="M2070.0,944.0 L2093.0,943.0 L2089.0,956.0 L2109.0,962.0 L2109.0,967.6 L2077.0,967.0 Z" fill="#a3d5ea"/>
<path d="M692.0,950.0 L708.0,955.0 L702.0,966.0 L695.0,973.0 L692.0,985.0 Z" fill="#a3d5ea"/>
<path d="M911.0,1136.0 L983.5,1130.4 L1044.7,1127.6 L1061.4,1113.7 L1089.0,1097.0 L1131.0,1085.9 L1156.0,1072.0 L1158.8,1044.0 L1170.0,1041.3 L1178.0,1060.8 L1200.5,1070.0 L1216.0,1062.0 L1260.0,1052.0 L1321.0,1049.6 L1381.0,1049.6 L1381.0,1062.0 L1465.0,1062.0 L1465.0,1049.6 L1490.0,1049.6 L1490.0,1066.7 L1541.0,1066.7 L1541.0,1075.0 L1643.0,1075.0 L1643.0,1088.0 L1690.0,1088.0 L1690.0,1098.8 L1806.3,1098.8 L1821.0,1188.0 L900.0,1188.0 Z" fill="#f4f4f4"/>
<path d="M2689.0,1076.0 L2720.0,1070.0 L2749.6,1077.7 L2797.4,1058.6 L2810.0,1053.9 L2870.6,1045.9 L2883.3,1080.9 L2910.4,1084.1 L2915.0,1119.0 L2848.3,1152.6 L2813.3,1144.6 L2791.0,1188.0 L2671.6,1188.0 L2679.6,1141.4 L2698.7,1119.0 Z" fill="#f4f4f4"/>
<path d="M2695.0,1045.0 L2740.0,1052.0 L2749.6,1077.7 L2698.7,1119.0 L2682.0,1100.0 Z" fill="#f0e9dd"/>
<path d="M2606.0,1160.0 L2630.0,1135.0 L2680.0,1122.0 L2679.6,1141.4 L2671.6,1188.0 L2620.0,1180.0 Z" fill="#f0e9dd"/>
<path d="M2851.0,1140.0 L2870.0,1118.0 L2915.0,1119.0 L2885.0,1135.0 L2852.0,1146.0 Z" fill="#d3f1da"/>
<path d="M2722.0,1132.0 L2750.0,1128.0 L2756.0,1151.0 L2735.0,1145.0 Z" fill="#d3f1da"/>
<path d="M1000.0,1188.0 L1010.0,1160.0 L1040.0,1150.0" fill="none" stroke="#d9dde9" stroke-width="2.5"/>
<path d="M1050.0,1188.0 L1048.0,1140.0 L1090.0,1130.0 L1135.0,1125.0 L1135.0,1090.0" fill="none" stroke="#d9dde9" stroke-width="2.5"/>
<path d="M1130.0,1125.0 L1160.0,1120.0 L1200.0,1112.0 L1230.0,1100.0 L1250.0,1090.0" fill="none" stroke="#d9dde9" stroke-width="2.5"/>
<path d="M1158.0,1072.0 L1160.0,1060.0 L1195.0,1060.0 L1210.0,1070.0 L1210.0,1120.0" fill="none" stroke="#d9dde9" stroke-width="2.5"/>
<path d="M982.0,1134.0 L985.0,1150.0 L1005.0,1165.0" fill="none" stroke="#d9dde9" stroke-width="2.5"/>
<path d="M1060.0,1150.0 L1062.0,1188.0" fill="none" stroke="#d9dde9" stroke-width="2.5"/>
<path d="M2713.0,1096.0 L2722.0,1077.0 L2740.0,1077.0" fill="none" stroke="#d9dde9" stroke-width="2.5"/>
<path d="M2833.0,1090.0 L2833.0,1084.0 L2910.0,1083.0 L3010.0,1080.0" fill="none" stroke="#d9dde9" stroke-width="2.5"/>
<path d="M2912.0,1108.0 L2980.0,1098.0 L3010.0,1098.0" fill="none" stroke="#d9dde9" stroke-width="2.5"/>
<path d="M2700.0,1140.0 L2696.0,1188.0" fill="none" stroke="#d9dde9" stroke-width="2.5"/>
<path d="M1390.0,1188.0 L1450.0,1135.0" fill="none" stroke="#dfe2ea" stroke-width="1.6"/>
<path d="M1435.0,1188.0 L1495.0,1135.0" fill="none" stroke="#dfe2ea" stroke-width="1.6"/>
<path d="M1480.0,1188.0 L1540.0,1135.0" fill="none" stroke="#dfe2ea" stroke-width="1.6"/>
<path d="M1525.0,1188.0 L1585.0,1135.0" fill="none" stroke="#dfe2ea" stroke-width="1.6"/>
<path d="M1570.0,1188.0 L1630.0,1135.0" fill="none" stroke="#dfe2ea" stroke-width="1.6"/>
<path d="M1430.0,1135.0 L1500.0,1188.0" fill="none" stroke="#dfe2ea" stroke-width="1.6"/>
<path d="M1485.0,1135.0 L1555.0,1188.0" fill="none" stroke="#dfe2ea" stroke-width="1.6"/>
<path d="M1540.0,1135.0 L1610.0,1188.0" fill="none" stroke="#dfe2ea" stroke-width="1.6"/>
<path d="M1595.0,1135.0 L1665.0,1188.0" fill="none" stroke="#dfe2ea" stroke-width="1.6"/>
<path d="M1210.0,1112.0 L1330.0,1110.9 L1480.0,1118.0" fill="none" stroke="#dfe2ea" stroke-width="1.6"/>
<path d="M1210.0,1138.0 L1330.0,1135.9 L1480.0,1144.0" fill="none" stroke="#dfe2ea" stroke-width="1.6"/>
<path d="M1210.0,1160.0 L1330.0,1160.9 L1480.0,1166.0" fill="none" stroke="#dfe2ea" stroke-width="1.6"/>
<path d="M1210.0,1180.0 L1330.0,1177.4 L1480.0,1186.0" fill="none" stroke="#dfe2ea" stroke-width="1.6"/>
<path d="M1235.0,1091.1 L1232.9,1188.0" fill="none" stroke="#dfe2ea" stroke-width="1.6"/>
<path d="M1290.0,1076.7 L1290.1,1188.0" fill="none" stroke="#dfe2ea" stroke-width="1.6"/>
<path d="M1350.0,1076.1 L1348.9,1188.0" fill="none" stroke="#dfe2ea" stroke-width="1.6"/>
<path d="M1470.0,1077.1 L1463.5,1188.0" fill="none" stroke="#dfe2ea" stroke-width="1.6"/>
<path d="M1530.0,1087.7 L1535.2,1188.0" fill="none" stroke="#dfe2ea" stroke-width="1.6"/>
<path d="M1700.0,1078.7 L1695.6,1188.0" fill="none" stroke="#dfe2ea" stroke-width="1.6"/>
<path d="M1770.0,1093.8 L1777.2,1188.0" fill="none" stroke="#dfe2ea" stroke-width="1.6"/>
<path d="M1005.0,1188.0 L1020.0,1175.0 L1060.0,1170.0 L1100.0,1172.0 L1131.0,1180.0 L1131.0,1188.0 Z" fill="#dde3f5"/>
<path d="M0.0,1021.0 L55.0,1021.0 L80.0,1025.0 L117.0,1029.0 L156.0,1028.0 L192.0,1020.0 L228.0,1018.5 L292.0,1026.5 L325.5,1046.0 L374.0,1065.5 L406.0,1064.5 L425.7,1051.0 L439.6,1051.0 L450.0,1056.6 L466.7,1060.8 L555.7,1060.8 L622.5,1067.8 L661.5,1085.9 L728.0,1124.8 L756.0,1144.3 L784.0,1154.0 L820.0,1149.9 L853.4,1155.4 L884.0,1166.5 L906.3,1188.0 L0.0,1188.0 Z" fill="#a3d7eb"/>
<path d="M0.0,1016.3 L55.6,1016.3 L78.0,1020.5 L117.0,1024.6 L155.8,1023.3 L192.0,1014.9 L228.0,1013.5 L292.0,1021.9 L325.5,1041.3 L374.0,1060.8 L406.0,1059.4 L425.7,1045.5 L439.6,1045.5 L464.0,1056.6 L553.0,1051.9 L628.0,1060.8 L717.0,1078.9 L733.8,1087.2 L756.0,1109.5 L778.3,1127.6 L814.5,1136.0 L853.4,1141.5 L892.4,1158.8 L900.7,1162.4 L930.6,1163.8 L994.6,1159.6 L1016.9,1152.6 L1094.8,1141.5 L1195.0,1127.6 L1339.6,1131.8 L1398.0,1172.0 L1420.0,1188.0" fill="none" stroke="#8290bb" stroke-width="6.5" stroke-linejoin="round"/>
<path d="M0.0,1016.3 L55.6,1016.3 L78.0,1020.5 L117.0,1024.6 L155.8,1023.3 L192.0,1014.9 L228.0,1013.5 L292.0,1021.9 L325.5,1041.3 L374.0,1060.8 L406.0,1059.4 L425.7,1045.5 L439.6,1045.5 L464.0,1056.6 L553.0,1051.9 L628.0,1060.8 L717.0,1078.9 L733.8,1087.2 L756.0,1109.5 L778.3,1127.6 L814.5,1136.0 L853.4,1141.5 L892.4,1158.8 L900.7,1162.4 L930.6,1163.8 L994.6,1159.6 L1016.9,1152.6 L1094.8,1141.5 L1195.0,1127.6 L1339.6,1131.8 L1398.0,1172.0 L1420.0,1188.0" fill="none" stroke="#a6b1d3" stroke-width="4.0" stroke-linejoin="round"/>
<path d="M1186.6,910.6 L1208.8,912.0 L1214.4,921.7 L1220.0,941.2 L1235.0,958.0 L1250.6,970.4 L1270.0,957.9 L1277.0,977.3 L1292.3,982.9 L1309.0,1001.0 L1306.0,1008.0 L1286.7,1019.0 L1284.0,1027.4 L1300.7,1035.8 L1307.6,1066.4 L1331.0,1097.0 L1335.4,1127.6" fill="none" stroke="#8290bb" stroke-width="4.5" stroke-linejoin="round"/>
<path d="M1186.6,910.6 L1208.8,912.0 L1214.4,921.7 L1220.0,941.2 L1235.0,958.0 L1250.6,970.4 L1270.0,957.9 L1277.0,977.3 L1292.3,982.9 L1309.0,1001.0 L1306.0,1008.0 L1286.7,1019.0 L1284.0,1027.4 L1300.7,1035.8 L1307.6,1066.4 L1331.0,1097.0 L1335.4,1127.6" fill="none" stroke="#a6b1d3" stroke-width="2.0" stroke-linejoin="round"/>
<path d="M1331.0,1097.0 L1359.0,1080.3 L1373.0,1080.3 L1384.0,1088.6 L1396.7,1099.0 L1420.0,1110.0 L1432.0,1113.0 L1510.0,1118.0 L1524.0,1121.0 L1537.0,1114.0 L1546.0,1124.0 L1555.0,1115.0 L1559.0,1110.0 L1575.0,1112.0 L1585.0,1120.0 L1594.0,1126.0 L1610.7,1129.0 L1650.0,1140.0 L1660.0,1142.0" fill="none" stroke="#8290bb" stroke-width="4.5" stroke-linejoin="round"/>
<path d="M1331.0,1097.0 L1359.0,1080.3 L1373.0,1080.3 L1384.0,1088.6 L1396.7,1099.0 L1420.0,1110.0 L1432.0,1113.0 L1510.0,1118.0 L1524.0,1121.0 L1537.0,1114.0 L1546.0,1124.0 L1555.0,1115.0 L1559.0,1110.0 L1575.0,1112.0 L1585.0,1120.0 L1594.0,1126.0 L1610.7,1129.0 L1650.0,1140.0 L1660.0,1142.0" fill="none" stroke="#a6b1d3" stroke-width="2.0" stroke-linejoin="round"/>
<path d="M1594.0,1126.0 L1584.0,1140.0 L1582.0,1175.0 L1577.0,1188.0" fill="none" stroke="#8290bb" stroke-width="4.5" stroke-linejoin="round"/>
<path d="M1594.0,1126.0 L1584.0,1140.0 L1582.0,1175.0 L1577.0,1188.0" fill="none" stroke="#a6b1d3" stroke-width="2.0" stroke-linejoin="round"/>
<path d="M1730.0,1136.0 L1750.0,1137.0 L1790.0,1148.0 L1800.0,1149.3 L1868.0,1148.5 L1872.3,1151.2 L1887.6,1155.4 L1886.0,1163.8 L1875.0,1181.8 L1883.5,1183.2 L1893.0,1188.0" fill="none" stroke="#8290bb" stroke-width="4.5" stroke-linejoin="round"/>
<path d="M1730.0,1136.0 L1750.0,1137.0 L1790.0,1148.0 L1800.0,1149.3 L1868.0,1148.5 L1872.3,1151.2 L1887.6,1155.4 L1886.0,1163.8 L1875.0,1181.8 L1883.5,1183.2 L1893.0,1188.0" fill="none" stroke="#a6b1d3" stroke-width="2.0" stroke-linejoin="round"/>
<path d="M2671.2,910.0 L2671.2,920.3 L2703.3,988.5 L2708.0,1023.3 L2715.8,1038.6 L2718.6,1049.7 L2735.3,1063.7 L2740.8,1083.1 L2754.7,1097.0 L2765.9,1119.3 L2788.1,1130.5 L2816.0,1113.8 L2821.6,1108.2" fill="none" stroke="#8290bb" stroke-width="4.5" stroke-linejoin="round"/>
<path d="M2671.2,910.0 L2671.2,920.3 L2703.3,988.5 L2708.0,1023.3 L2715.8,1038.6 L2718.6,1049.7 L2735.3,1063.7 L2740.8,1083.1 L2754.7,1097.0 L2765.9,1119.3 L2788.1,1130.5 L2816.0,1113.8 L2821.6,1108.2" fill="none" stroke="#a6b1d3" stroke-width="2.0" stroke-linejoin="round"/>
<path d="M2860.5,1105.4 L2916.2,1108.2 L2963.5,1116.5 L2974.7,1127.7 L2960.7,1138.8 L2966.3,1161.0 L3010.0,1152.7" fill="none" stroke="#8290bb" stroke-width="4.5" stroke-linejoin="round"/>
<path d="M2860.5,1105.4 L2916.2,1108.2 L2963.5,1116.5 L2974.7,1127.7 L2960.7,1138.8 L2966.3,1161.0 L3010.0,1152.7" fill="none" stroke="#a6b1d3" stroke-width="2.0" stroke-linejoin="round"/>
<path d="M2788.1,1130.5 L2779.8,1155.5 L2771.4,1166.7 L2707.4,1172.2 L2707.4,1188.0" fill="none" stroke="#8290bb" stroke-width="4.5" stroke-linejoin="round"/>
<path d="M2788.1,1130.5 L2779.8,1155.5 L2771.4,1166.7 L2707.4,1172.2 L2707.4,1188.0" fill="none" stroke="#a6b1d3" stroke-width="2.0" stroke-linejoin="round"/>
<path d="M2585.0,1188.0 L2600.0,1178.0 L2635.0,1183.4 L2660.0,1188.0" fill="none" stroke="#8290bb" stroke-width="4.5" stroke-linejoin="round"/>
<path d="M2585.0,1188.0 L2600.0,1178.0 L2635.0,1183.4 L2660.0,1188.0" fill="none" stroke="#a6b1d3" stroke-width="2.0" stroke-linejoin="round"/>
<path d="M1094.8,1141.5 L1130.0,1135.0 L1150.0,1125.0 L1160.0,1112.0" fill="none" stroke="#a3afd2" stroke-width="4"/>
<path d="M1016.0,1152.6 L1020.0,1188.0" fill="none" stroke="#a3afd2" stroke-width="4"/>
<path d="M1387.0,988.0 L1385.0,1005.0 L1393.0,1012.0 L1400.0,1030.0 L1408.0,1040.0 L1420.0,1045.0" fill="none" stroke="#888" stroke-width="1.5" stroke-dasharray="4,3"/>
<path d="M1468.0,985.0 L1490.0,1000.0 L1493.0,1012.0" fill="none" stroke="#888" stroke-width="1.5" stroke-dasharray="4,3"/>
<g transform="translate(97.8,1025)"><path d="M-19,-13 Q-16,-17 -12,-15 Q-6,-18 0,-15 Q6,-18 12,-15 Q16,-17 19,-13 Q21,-2 17,8 Q10,14 0,17 Q-10,14 -17,8 Q-21,-2 -19,-13 Z" fill="#fff" stroke="#666" stroke-width="2"/><text x="0" y="7.5" font-family="Liberation Sans" font-size="19" fill="#333" text-anchor="middle">101</text></g>
<g transform="translate(951,1164)"><path d="M-19,-13 Q-16,-17 -12,-15 Q-6,-18 0,-15 Q6,-18 12,-15 Q16,-17 19,-13 Q21,-2 17,8 Q10,14 0,17 Q-10,14 -17,8 Q-21,-2 -19,-13 Z" fill="#fff" stroke="#666" stroke-width="2"/><text x="0" y="7.5" font-family="Liberation Sans" font-size="19" fill="#333" text-anchor="middle">101</text></g>
<g transform="translate(1235.5,957.9)"><rect x="-20.0" y="-13" width="40" height="26" rx="12" fill="#fff" stroke="#555" stroke-width="2"/><text x="0" y="7.5" font-family="Liberation Sans" font-size="20" fill="#333" text-anchor="middle">154</text></g>
<g transform="translate(1396.7,1099)"><rect x="-20.0" y="-13" width="40" height="26" rx="12" fill="#fff" stroke="#555" stroke-width="2"/><text x="0" y="7.5" font-family="Liberation Sans" font-size="20" fill="#333" text-anchor="middle">192</text></g>
<g transform="translate(1610.7,1129)"><rect x="-20.0" y="-13" width="40" height="26" rx="12" fill="#fff" stroke="#555" stroke-width="2"/><text x="0" y="7.5" font-family="Liberation Sans" font-size="20" fill="#333" text-anchor="middle">192</text></g>
<g transform="translate(1148,1188)"><rect x="-20.0" y="-13" width="40" height="26" rx="12" fill="#fff" stroke="#555" stroke-width="2"/><text x="0" y="7.5" font-family="Liberation Sans" font-size="20" fill="#333" text-anchor="middle">217</text></g>
<g transform="translate(2708,1022.5)"><rect x="-16.0" y="-13" width="32" height="26" rx="12" fill="#fff" stroke="#555" stroke-width="2"/><text x="0" y="7.5" font-family="Liberation Sans" font-size="20" fill="#333" text-anchor="middle">33</text></g>
<g transform="translate(2893,1105.4)"><rect x="-20.0" y="-13" width="40" height="26" rx="12" fill="#fff" stroke="#555" stroke-width="2"/><text x="0" y="7.5" font-family="Liberation Sans" font-size="20" fill="#333" text-anchor="middle">150</text></g>
<g transform="translate(2653,1192)"><rect x="-20.0" y="-13" width="40" height="26" rx="12" fill="#fff" stroke="#555" stroke-width="2"/><text x="0" y="7.5" font-family="Liberation Sans" font-size="20" fill="#333" text-anchor="middle">150</text></g>
<text x="471" y="1062" font-family="Liberation Sans" font-size="23.5" fill="#333" stroke="#fff" stroke-width="4" stroke-linejoin="round" paint-order="stroke" text-anchor="start">Capitan</text>
<text x="728" y="1124" font-family="Liberation Sans" font-size="23.5" fill="#333" stroke="#fff" stroke-width="4" stroke-linejoin="round" paint-order="stroke" text-anchor="start">Naples</text>
<text x="1104.5" y="1159" font-family="Liberation Sans" font-size="23" fill="#333" stroke="#fff" stroke-width="4" stroke-linejoin="round" paint-order="stroke" text-anchor="start">Goleta</text>
<text x="1211.6" y="1144.3" font-family="Liberation Sans" font-size="23" fill="#333" stroke="#fff" stroke-width="4" stroke-linejoin="round" paint-order="stroke" text-anchor="start">Eastern</text>
<text x="1181" y="1168" font-family="Liberation Sans" font-size="23.5" fill="#333" stroke="#fff" stroke-width="4" stroke-linejoin="round" paint-order="stroke" text-anchor="start">Goleta Valley</text>
<text x="1432" y="1094.2" font-family="Liberation Sans" font-size="24" fill="#333" stroke="#fff" stroke-width="4" stroke-linejoin="round" paint-order="stroke" text-anchor="start">Mission</text>
<text x="1433.5" y="1117.9" font-family="Liberation Sans" font-size="23" fill="#333" stroke="#fff" stroke-width="4" stroke-linejoin="round" paint-order="stroke" text-anchor="start">Canyon</text>
<text x="1654.7" y="1156.3" font-family="Liberation Sans" font-size="24.5" fill="#333" stroke="#fff" stroke-width="4" stroke-linejoin="round" paint-order="stroke" text-anchor="start">Montecito</text>
<text x="2664.3" y="1119.3" font-family="Liberation Sans" font-size="23.5" fill="#333" stroke="#fff" stroke-width="4" stroke-linejoin="round" paint-order="stroke" text-anchor="start">Meiners Oaks</text>
<text x="2821.6" y="1112" font-family="Liberation Sans" font-size="23" fill="#333" stroke="#fff" stroke-width="4" stroke-linejoin="round" paint-order="stroke" text-anchor="start">Ojai</text>
<text x="2659.5" y="1166.7" font-family="Liberation Sans" font-size="24" fill="#333" stroke="#fff" stroke-width="4" stroke-linejoin="round" paint-order="stroke" text-anchor="start">Mira Monte</text>
<text x="2660" y="916" font-family="Liberation Sans" font-size="23.5" fill="#333" stroke="#fff" stroke-width="4" stroke-linejoin="round" paint-order="stroke" text-anchor="start">Springs</text>
<text x="-1" y="1032" font-family="Liberation Sans" font-size="23.5" fill="#333" stroke="#fff" stroke-width="4" stroke-linejoin="round" paint-order="stroke" text-anchor="start">vi.ti</text>
<path d="M1821.1,1247.1 L1799.6,1327.4 L1758.0,1399.4 L1699.2,1458.2 L1627.2,1499.8 L1546.9,1521.3 L1463.7,1521.3 L1383.4,1499.8 L1311.4,1458.2 L1252.6,1399.4 L1211.0,1327.4 L1189.5,1247.1 L1189.5,1163.9 L1211.0,1083.6 L1252.6,1011.6 L1311.4,952.8 L1383.4,911.2 L1463.7,889.7 L1546.9,889.7 L1627.2,911.2 L1699.2,952.8 L1758.0,1011.6 L1799.6,1083.6 L1821.1,1163.9 Z" fill="rgb(235,40,28)" fill-opacity="0.6" stroke="#e52d22" stroke-width="3.5"/>
</svg>
</div>
<!-- map controls -->
<div class="a" style="left:10px;top:931px;width:280px;height:57px;background:#fff;border-radius:4px;box-shadow:0 1px 3px rgba(0,0,0,0.3)">
 <div class="a" style="left:49px;top:2px;width:7px;height:53px;background:linear-gradient(90deg,rgba(0,0,0,0),rgba(0,0,0,0.07))"></div>
 <div class="a" style="left:105px;top:2px;width:7px;height:53px;background:linear-gradient(90deg,rgba(0,0,0,0),rgba(0,0,0,0.07))"></div>
 <div class="a" style="left:161px;top:2px;width:7px;height:53px;background:linear-gradient(90deg,rgba(0,0,0,0),rgba(0,0,0,0.07))"></div>
 <div class="a" style="left:217px;top:2px;width:7px;height:53px;background:linear-gradient(90deg,rgba(0,0,0,0),rgba(0,0,0,0.07))"></div>
 <svg class="a" style="left:0;top:0" width="280" height="57" viewBox="10 931 280 57">
  <path d="M34.8,974 L24.7,962.7 L24.1,959.9 L27.5,957.6 L30.9,961 M30.9,961 L26.4,952 L29.2,947.5 L33.1,949.2 L34.8,955.4 M34.8,955.4 L36,946.4 L38.8,945.3 L41.6,947.5 L41,955.4 M41.5,950 L43.3,948.1 L47.2,949.2 L46.7,957.6 M47.5,953 L48.9,951.5 L51.7,954.8 L51.7,961 L47.8,967.8 L45,974.5" fill="none" stroke="#111" stroke-width="2.2" stroke-linejoin="round" stroke-linecap="round"/>
  <path d="M93.9,974 L93.9,962" stroke="#999" stroke-width="2.8"/>
  <path d="M93.9,966 Q84,956 84,953 A10,10 0 1 1 103.8,953 Q103.8,956 93.9,966 Z" fill="#bababa" stroke="#999" stroke-width="1.8"/>
  <path d="M134.5,970 L145.2,953.7 L154.2,963.8 L164.9,947.5" fill="none" stroke="#9a9a9a" stroke-width="2.6"/>
  <path d="M193,948.1 L204.8,958.2 L218.9,952 L216.6,961.6 L198.6,970 Z" fill="#bdbdbd" stroke="#9a9a9a" stroke-width="2.4" stroke-linejoin="round"/>
  <rect x="251.5" y="948.5" width="22" height="22" fill="#bdbdbd" stroke="#a3a3a3" stroke-width="2.6"/>
 </svg>
</div>
<div class="a" style="left:10px;top:1019px;width:56px;height:114px;background:#fff;border-radius:2px;box-shadow:0 1px 3px rgba(0,0,0,0.3)">
 <div class="a" style="left:10px;top:56px;width:36px;height:2px;background:#e6e6e6"></div>
 <div class="a" style="left:16px;top:26px;width:24px;height:5px;background:#666"></div>
 <div class="a" style="left:25.5px;top:16.5px;width:5px;height:24px;background:#666"></div>
 <div class="a" style="left:16px;top:84px;width:24px;height:5px;background:#666"></div>
</div>
<div class="a" style="left:2490px;top:931px;width:220px;height:58px;background:#fff;border-radius:3px;box-shadow:0 1px 3px rgba(0,0,0,0.25);overflow:hidden">
 <div class="a" style="left:16px;top:17px;font-size:22.5px;line-height:26px;color:#222">Layers</div>
 <div class="a" style="left:162px;top:0;width:58px;height:28px;background:linear-gradient(#cd5843 80%,#f0c8c0)"></div>
</div>
<div class="a" style="left:2731px;top:931px;width:269px;height:56px;background:#fff;border-radius:3px;box-shadow:0 1px 3px rgba(0,0,0,0.25)">
 <div class="a" style="left:113px;top:0;width:2px;height:56px;background:#eeeeee"></div>
 <div class="a" style="left:0;top:16px;width:114px;text-align:center;font-size:23px;font-weight:bold;line-height:26px;color:#111">Map</div>
 <div class="a" style="left:115px;top:16px;width:154px;text-align:center;font-size:24px;line-height:26px;color:#565656">Satellite</div>
</div>
<div class="a" style="left:2944px;top:1015px;width:56px;height:56px;background:#fff;border-radius:3px;box-shadow:0 1px 3px rgba(0,0,0,0.25)">
 <svg class="a" style="left:0;top:0" width="56" height="56" viewBox="0 0 56 56"><path d="M11.5,22 L11.5,11.5 L22,11.5 M34,11.5 L44.5,11.5 L44.5,22 M44.5,34 L44.5,44.5 L34,44.5 M22,44.5 L11.5,44.5 L11.5,34" fill="none" stroke="#666" stroke-width="4"/></svg>
</div>

</body></html>
